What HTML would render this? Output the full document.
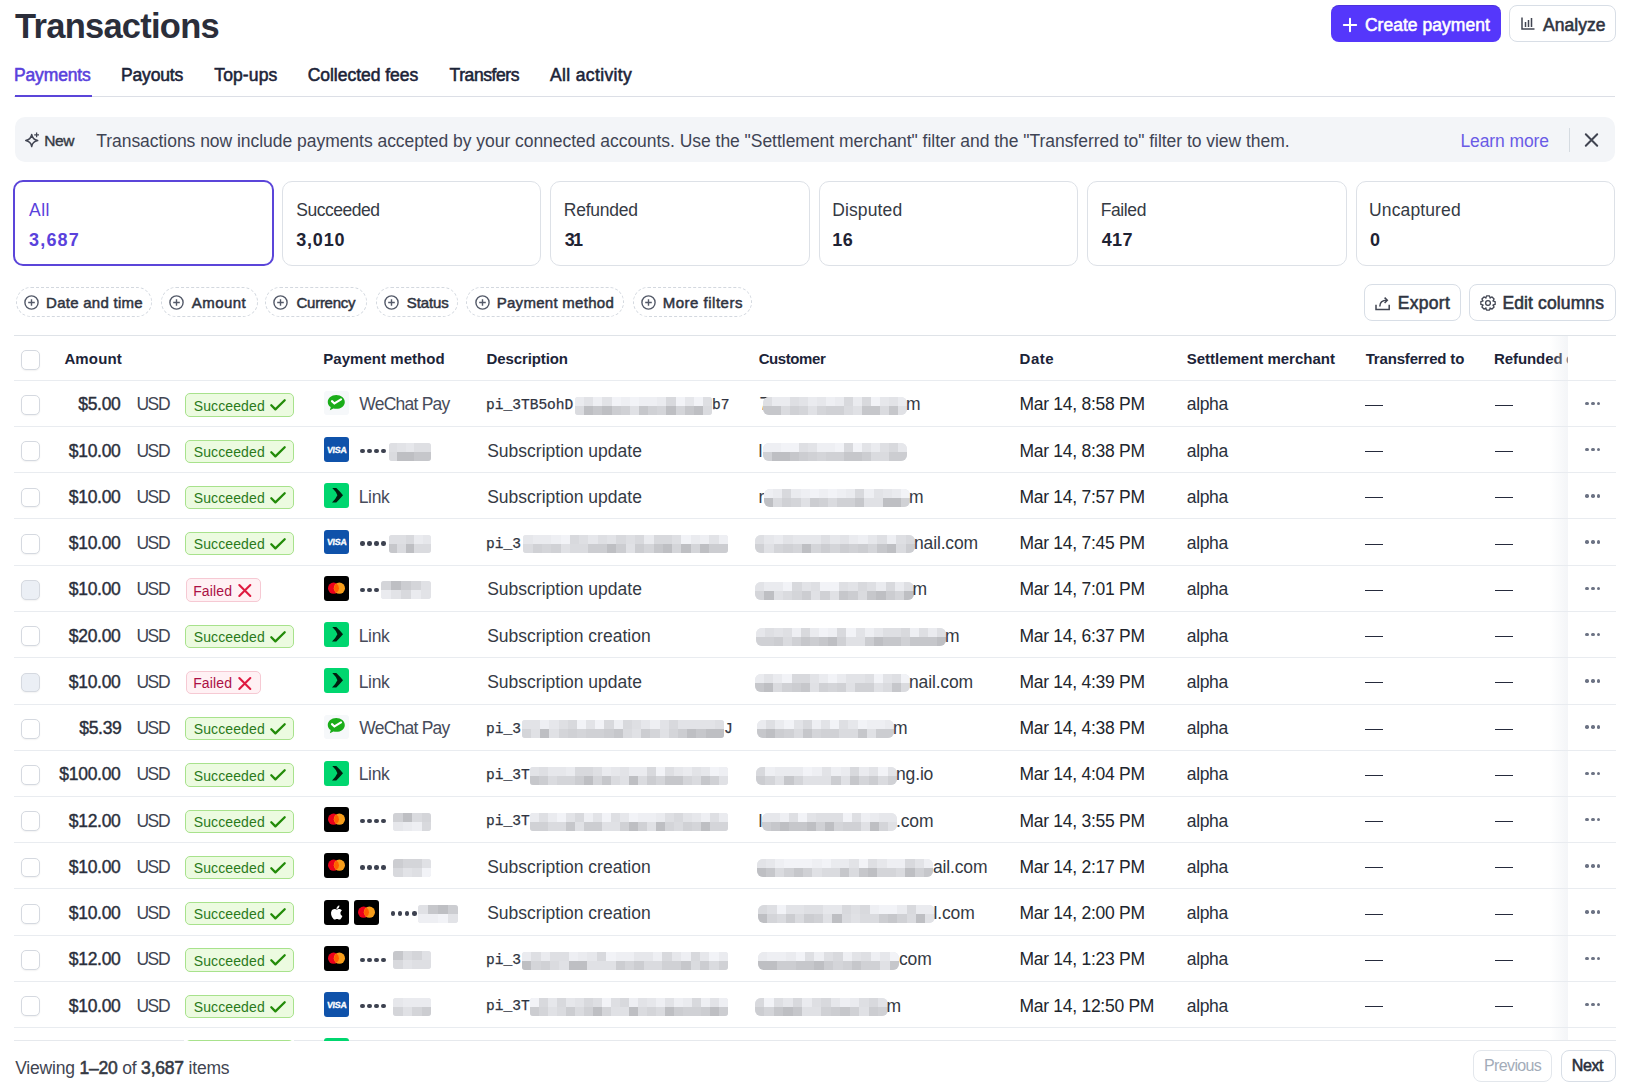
<!DOCTYPE html>
<html><head><meta charset="utf-8"><title>Transactions</title>
<style>
html,body{margin:0;padding:0;background:#fff;}
body{width:1637px;height:1090px;position:relative;overflow:hidden;font-family:"Liberation Sans", sans-serif;}
.t{position:absolute;line-height:0;white-space:nowrap;}
.r{position:absolute;}
svg.r{overflow:visible}
</style></head><body>
<div class="t" style="left:15.10px;top:25.85px;font-size:34.5px;font-weight:700;color:#2b2e3a;letter-spacing:-0.749px;">Transactions</div>
<div class="r" style="left:1331.00px;top:5.00px;width:170.00px;height:37.00px;background:#5537fb;border-radius:8px;box-shadow:inset 0 1px 0 rgba(60,40,160,.35);"></div>
<svg class="r" style="left:1342.5px;top:17.5px" width="14" height="14" viewBox="0 0 14 14"><path d="M7 0.8v12.4M0.8 7h12.4" stroke="#fff" stroke-width="2" stroke-linecap="round"/></svg>
<div class="t" style="left:1364.90px;top:25.14px;font-size:17.5px;font-weight:400;color:#fff;letter-spacing:0.035px;-webkit-text-stroke:0.55px #fff;">Create payment</div>
<div class="r" style="left:1509.00px;top:5.00px;width:106.50px;height:36.50px;background:#fff;border:1px solid #d8dee6;border-radius:8px;box-sizing:border-box;"></div>
<svg class="r" style="left:1520.5px;top:17px" width="14" height="13" viewBox="0 0 14 13"><path d="M1 0.5v11.5h12.5" stroke="#414552" stroke-width="1.5" fill="none"/><path d="M4.5 5v5M7.5 3v7M10.5 1v9" stroke="#414552" stroke-width="1.5"/></svg>
<div class="t" style="left:1543.00px;top:25.14px;font-size:17.5px;font-weight:400;color:#2f3441;letter-spacing:0.029px;-webkit-text-stroke:0.55px #2f3441;">Analyze</div>
<div class="t" style="left:14.00px;top:74.54px;font-size:17.5px;font-weight:400;color:#5a42dc;letter-spacing:-0.151px;-webkit-text-stroke:0.55px #5a42dc;">Payments</div>
<div class="t" style="left:121.00px;top:74.54px;font-size:17.5px;font-weight:400;color:#1c2438;letter-spacing:-0.164px;-webkit-text-stroke:0.55px #1c2438;">Payouts</div>
<div class="t" style="left:214.30px;top:74.54px;font-size:17.5px;font-weight:400;color:#1c2438;letter-spacing:0.115px;-webkit-text-stroke:0.55px #1c2438;">Top-ups</div>
<div class="t" style="left:307.70px;top:74.54px;font-size:17.5px;font-weight:400;color:#1c2438;letter-spacing:-0.027px;-webkit-text-stroke:0.55px #1c2438;">Collected fees</div>
<div class="t" style="left:449.60px;top:74.54px;font-size:17.5px;font-weight:400;color:#1c2438;letter-spacing:-0.426px;-webkit-text-stroke:0.55px #1c2438;">Transfers</div>
<div class="t" style="left:549.90px;top:74.54px;font-size:17.5px;font-weight:400;color:#1c2438;letter-spacing:0.378px;-webkit-text-stroke:0.55px #1c2438;">All activity</div>
<div class="r" style="left:14.00px;top:95.60px;width:1601.00px;height:1.20px;background:#dcdfe6;"></div>
<div class="r" style="left:15.00px;top:94.60px;width:76.50px;height:2.60px;background:#5b45d9;"></div>
<div class="r" style="left:15.00px;top:117.20px;width:1599.50px;height:44.50px;background:#f3f5f8;border-radius:10px;"></div>
<svg class="r" style="left:25px;top:132px" width="16" height="16" viewBox="0 0 16 16"><path d="M6.7 2.5 Q7.6000000000000005 7.6 12.7 8.5 Q7.6000000000000005 9.4 6.7 14.5 Q5.8 9.4 0.7000000000000002 8.5 Q5.8 7.6 6.7 2.5Z" stroke="#414552" stroke-width="1.45" fill="none" stroke-linejoin="round"/><path d="M11.6 0.4v4.8M9.2 2.8h4.8" stroke="#414552" stroke-width="1.25"/></svg>
<div class="t" style="left:44.30px;top:141.43px;font-size:15.5px;font-weight:400;color:#353a44;letter-spacing:-0.407px;-webkit-text-stroke:0.4px #353a44;">New</div>
<div class="t" style="left:96.20px;top:140.74px;font-size:17.5px;font-weight:400;color:#3f4454;letter-spacing:-0.034px;">Transactions now include payments accepted by your connected accounts. Use the "Settlement merchant" filter and the "Transferred to" filter to view them.</div>
<div class="t" style="left:1460.40px;top:140.64px;font-size:17.5px;font-weight:400;color:#6a5be6;letter-spacing:-0.095px;">Learn more</div>
<div class="r" style="left:1568.50px;top:127.50px;width:1.40px;height:24.00px;background:#d5dbe1;"></div>
<svg class="r" style="left:1584px;top:132.5px" width="15" height="14" viewBox="0 0 15 14"><path d="M1.8 1.3L13.2 12.7M13.2 1.3L1.8 12.7" stroke="#414552" stroke-width="2" stroke-linecap="round"/></svg>
<div class="r" style="left:13.20px;top:180.40px;width:261.20px;height:86.00px;border:2px solid #5b45d9;border-radius:10px;box-sizing:border-box;background:#fff;"></div>
<div class="t" style="left:29.00px;top:209.84px;font-size:17.5px;font-weight:400;color:#5a42dc;letter-spacing:0.520px;">All</div>
<div class="t" style="left:29.00px;top:240.16px;font-size:18px;font-weight:700;color:#5a42dc;letter-spacing:1.192px;">3,687</div>
<div class="r" style="left:281.66px;top:181.00px;width:259.80px;height:85.00px;border:1px solid #dde1e7;border-radius:10px;box-sizing:border-box;background:#fff;"></div>
<div class="t" style="left:296.26px;top:209.84px;font-size:17.5px;font-weight:400;color:#353a44;letter-spacing:-0.467px;">Succeeded</div>
<div class="t" style="left:296.26px;top:240.16px;font-size:18px;font-weight:700;color:#1f2333;letter-spacing:0.792px;">3,010</div>
<div class="r" style="left:550.12px;top:181.00px;width:259.80px;height:85.00px;border:1px solid #dde1e7;border-radius:10px;box-sizing:border-box;background:#fff;"></div>
<div class="t" style="left:563.72px;top:209.84px;font-size:17.5px;font-weight:400;color:#353a44;letter-spacing:-0.223px;">Refunded</div>
<div class="t" style="left:564.72px;top:240.16px;font-size:18px;font-weight:700;color:#1f2333;letter-spacing:-1.711px;">31</div>
<div class="r" style="left:818.58px;top:181.00px;width:259.80px;height:85.00px;border:1px solid #dde1e7;border-radius:10px;box-sizing:border-box;background:#fff;"></div>
<div class="t" style="left:832.18px;top:209.84px;font-size:17.5px;font-weight:400;color:#353a44;letter-spacing:0.138px;">Disputed</div>
<div class="t" style="left:832.18px;top:240.16px;font-size:18px;font-weight:700;color:#1f2333;letter-spacing:0.489px;">16</div>
<div class="r" style="left:1087.04px;top:181.00px;width:259.80px;height:85.00px;border:1px solid #dde1e7;border-radius:10px;box-sizing:border-box;background:#fff;"></div>
<div class="t" style="left:1100.64px;top:209.84px;font-size:17.5px;font-weight:400;color:#353a44;letter-spacing:-0.386px;">Failed</div>
<div class="t" style="left:1101.64px;top:240.16px;font-size:18px;font-weight:700;color:#1f2333;letter-spacing:0.489px;">417</div>
<div class="r" style="left:1355.50px;top:181.00px;width:259.80px;height:85.00px;border:1px solid #dde1e7;border-radius:10px;box-sizing:border-box;background:#fff;"></div>
<div class="t" style="left:1369.10px;top:209.84px;font-size:17.5px;font-weight:400;color:#353a44;letter-spacing:0.118px;">Uncaptured</div>
<div class="t" style="left:1370.10px;top:240.16px;font-size:18px;font-weight:700;color:#1f2333;">0</div>
<div class="r" style="left:15.80px;top:286.80px;width:136.70px;height:29.80px;border:1.2px dashed #d3d8df;border-radius:15px;box-sizing:border-box;"></div>
<svg class="r" style="left:24.00px;top:294.6px" width="15" height="15" viewBox="0 0 15 15"><circle cx="7.5" cy="7.5" r="6.6" stroke="#545a69" stroke-width="1.4" fill="none"/><path d="M7.5 4.2v6.6M4.2 7.5h6.6" stroke="#545a69" stroke-width="1.4"/></svg>
<div class="t" style="left:46.10px;top:302.70px;font-size:15px;font-weight:400;color:#2f3441;letter-spacing:0.263px;-webkit-text-stroke:0.5px #2f3441;">Date and time</div>
<div class="r" style="left:160.50px;top:286.80px;width:97.00px;height:29.80px;border:1.2px dashed #d3d8df;border-radius:15px;box-sizing:border-box;"></div>
<svg class="r" style="left:168.70px;top:294.6px" width="15" height="15" viewBox="0 0 15 15"><circle cx="7.5" cy="7.5" r="6.6" stroke="#545a69" stroke-width="1.4" fill="none"/><path d="M7.5 4.2v6.6M4.2 7.5h6.6" stroke="#545a69" stroke-width="1.4"/></svg>
<div class="t" style="left:191.80px;top:302.70px;font-size:15px;font-weight:400;color:#2f3441;letter-spacing:0.455px;-webkit-text-stroke:0.5px #2f3441;">Amount</div>
<div class="r" style="left:265.20px;top:286.80px;width:102.30px;height:29.80px;border:1.2px dashed #d3d8df;border-radius:15px;box-sizing:border-box;"></div>
<svg class="r" style="left:273.40px;top:294.6px" width="15" height="15" viewBox="0 0 15 15"><circle cx="7.5" cy="7.5" r="6.6" stroke="#545a69" stroke-width="1.4" fill="none"/><path d="M7.5 4.2v6.6M4.2 7.5h6.6" stroke="#545a69" stroke-width="1.4"/></svg>
<div class="t" style="left:296.50px;top:302.70px;font-size:15px;font-weight:400;color:#2f3441;letter-spacing:-0.264px;-webkit-text-stroke:0.5px #2f3441;">Currency</div>
<div class="r" style="left:375.50px;top:286.80px;width:82.70px;height:29.80px;border:1.2px dashed #d3d8df;border-radius:15px;box-sizing:border-box;"></div>
<svg class="r" style="left:383.70px;top:294.6px" width="15" height="15" viewBox="0 0 15 15"><circle cx="7.5" cy="7.5" r="6.6" stroke="#545a69" stroke-width="1.4" fill="none"/><path d="M7.5 4.2v6.6M4.2 7.5h6.6" stroke="#545a69" stroke-width="1.4"/></svg>
<div class="t" style="left:406.80px;top:302.70px;font-size:15px;font-weight:400;color:#2f3441;letter-spacing:-0.125px;-webkit-text-stroke:0.5px #2f3441;">Status</div>
<div class="r" style="left:466.40px;top:286.80px;width:157.80px;height:29.80px;border:1.2px dashed #d3d8df;border-radius:15px;box-sizing:border-box;"></div>
<svg class="r" style="left:474.60px;top:294.6px" width="15" height="15" viewBox="0 0 15 15"><circle cx="7.5" cy="7.5" r="6.6" stroke="#545a69" stroke-width="1.4" fill="none"/><path d="M7.5 4.2v6.6M4.2 7.5h6.6" stroke="#545a69" stroke-width="1.4"/></svg>
<div class="t" style="left:496.70px;top:302.70px;font-size:15px;font-weight:400;color:#2f3441;letter-spacing:0.281px;-webkit-text-stroke:0.5px #2f3441;">Payment method</div>
<div class="r" style="left:632.50px;top:286.80px;width:119.90px;height:29.80px;border:1.2px dashed #d3d8df;border-radius:15px;box-sizing:border-box;"></div>
<svg class="r" style="left:640.70px;top:294.6px" width="15" height="15" viewBox="0 0 15 15"><circle cx="7.5" cy="7.5" r="6.6" stroke="#545a69" stroke-width="1.4" fill="none"/><path d="M7.5 4.2v6.6M4.2 7.5h6.6" stroke="#545a69" stroke-width="1.4"/></svg>
<div class="t" style="left:662.80px;top:302.70px;font-size:15px;font-weight:400;color:#2f3441;letter-spacing:0.493px;-webkit-text-stroke:0.5px #2f3441;">More filters</div>
<div class="r" style="left:1364.40px;top:284.10px;width:96.50px;height:36.50px;border:1px solid #d8dee6;border-radius:8px;box-sizing:border-box;background:#fff;"></div>
<svg class="r" style="left:1375px;top:295.5px" width="16" height="15" viewBox="0 0 16 15"><path d="M1 8.8v4.7h13.2v-4.7" stroke="#414552" stroke-width="1.5" fill="none"/><path d="M4.8 10.5 C4.8 6.5 7 4.3 12 4.3" stroke="#414552" stroke-width="1.5" fill="none"/><path d="M9.6 1.6l2.7 2.7-2.7 2.7" stroke="#414552" stroke-width="1.5" fill="none"/></svg>
<div class="t" style="left:1397.70px;top:303.14px;font-size:17.5px;font-weight:400;color:#2f3441;letter-spacing:0.317px;-webkit-text-stroke:0.55px #2f3441;">Export</div>
<div class="r" style="left:1469.20px;top:284.10px;width:146.40px;height:36.50px;border:1px solid #d8dee6;border-radius:8px;box-sizing:border-box;background:#fff;"></div>
<svg class="r" style="left:1479.5px;top:294.5px" width="16" height="16" viewBox="0 0 16 16"><path d="M15.15 6.55 L15.15 9.45 L12.93 10.20 L13.04 9.93 L14.08 12.03 L12.03 14.08 L9.93 13.04 L10.20 12.93 L9.45 15.15 L6.55 15.15 L5.80 12.93 L6.07 13.04 L3.97 14.08 L1.92 12.03 L2.96 9.93 L3.07 10.20 L0.85 9.45 L0.85 6.55 L3.07 5.80 L2.96 6.07 L1.92 3.97 L3.97 1.92 L6.07 2.96 L5.80 3.07 L6.55 0.85 L9.45 0.85 L10.20 3.07 L9.93 2.96 L12.03 1.92 L14.08 3.97 L13.04 6.07 L12.93 5.80Z" stroke="#414552" stroke-width="1.3" fill="none" stroke-linejoin="round"/><circle cx="8" cy="8" r="2.4" stroke="#414552" stroke-width="1.3" fill="none"/></svg>
<div class="t" style="left:1502.40px;top:303.14px;font-size:17.5px;font-weight:400;color:#2f3441;letter-spacing:0.124px;-webkit-text-stroke:0.55px #2f3441;">Edit columns</div>
<div class="r" style="left:14.00px;top:334.60px;width:1601.50px;height:1.30px;background:#dfe3e8;"></div>
<div class="t" style="left:64.40px;top:358.50px;font-size:15px;font-weight:700;color:#1c2438;letter-spacing:0.148px;">Amount</div>
<div class="t" style="left:323.20px;top:358.50px;font-size:15px;font-weight:700;color:#1c2438;letter-spacing:0.047px;">Payment method</div>
<div class="t" style="left:486.50px;top:358.50px;font-size:15px;font-weight:700;color:#1c2438;letter-spacing:-0.105px;">Description</div>
<div class="t" style="left:758.70px;top:358.50px;font-size:15px;font-weight:700;color:#1c2438;letter-spacing:-0.425px;">Customer</div>
<div class="t" style="left:1019.60px;top:358.50px;font-size:15px;font-weight:700;color:#1c2438;letter-spacing:0.477px;">Date</div>
<div class="t" style="left:1186.70px;top:358.50px;font-size:15px;font-weight:700;color:#1c2438;letter-spacing:-0.010px;">Settlement merchant</div>
<div class="t" style="left:1365.70px;top:358.50px;font-size:15px;font-weight:700;color:#1c2438;letter-spacing:-0.169px;">Transferred to</div>
<div class="t" style="left:1494.00px;top:358.50px;font-size:15px;font-weight:700;color:#1c2438;letter-spacing:-0.086px;">Refunded</div>
<div class="r" style="left:1566px;top:350px;width:2px;height:16px;overflow:hidden"><div class="t" style="left:0;top:8.5px;font-size:15px;font-weight:700;color:#1c2438">c</div></div>
<div class="r" style="left:21.00px;top:350.00px;width:19.00px;height:19.80px;border:1.2px solid #d5d9e0;border-radius:5px;box-sizing:border-box;background:#fff;box-shadow:0 1px 1.5px rgba(0,0,0,.05);"></div>
<div class="r" style="left:0;top:0;width:1637px;height:1041px;overflow:hidden">
<div class="r" style="left:14.00px;top:380.00px;width:1601.50px;height:1.00px;background:#e9ecf0;"></div>
<div class="r" style="left:21.00px;top:395.18px;width:19.00px;height:19.80px;border:1.2px solid #d5d9e0;border-radius:5px;box-sizing:border-box;background:#fff;box-shadow:0 1px 1.5px rgba(0,0,0,.05);"></div>
<div class="t" style="right:1516.47px;top:404.41px;font-size:17.5px;font-weight:400;color:#2a2f3c;letter-spacing:-0.300px;-webkit-text-stroke:0.4px #2a2f3c;">$5.00</div>
<div class="t" style="left:136.40px;top:404.41px;font-size:17.5px;font-weight:400;color:#414552;letter-spacing:-1.405px;">USD</div>
<div class="r" style="left:185.20px;top:393.40px;width:108.50px;height:23.20px;background:#ecfbe0;border:1px solid #a8e28c;border-radius:5px;box-sizing:border-box;"></div>
<div class="t" style="left:193.70px;top:405.62px;font-size:14px;font-weight:400;color:#2a7a1a;letter-spacing:0.116px;">Succeeded</div>
<svg class="r" style="left:269.5px;top:399.45px" width="16" height="12" viewBox="0 0 16 12"><path d="M1.3 6.3l4.1 4.1L14.7 1.2" stroke="#238b09" stroke-width="2.3" fill="none" stroke-linecap="round" stroke-linejoin="round"/></svg>
<div class="r" style="left:324px;top:390.85px;width:25px;height:24.5px;background:#f6f8fa;border-radius:3px"></div>
<svg class="r" style="left:325.6px;top:392.65px" width="21" height="20" viewBox="0 0 19 18"><path d="M9.3 1.8C5 1.8 1.6 4.6 1.6 8c0 1.9 1 3.6 2.7 4.7l-.8 2.9 3.2-1.7c.8.2 1.7.4 2.6.4 4.3 0 7.7-2.8 7.7-6.3S13.6 1.8 9.3 1.8z" fill="#1aad19"/><path d="M5.4 7.3l2.2 2.1 6-3.6" stroke="#fff" stroke-width="1.9" fill="none" stroke-linecap="round"/></svg>
<div class="t" style="left:359.30px;top:404.41px;font-size:17.5px;font-weight:400;color:#474c5b;letter-spacing:-0.774px;">WeChat Pay</div>
<div class="t" style="left:486.00px;top:404.83px;font-size:14.55px;font-weight:400;color:#30343f;font-family:'Liberation Mono', monospace;-webkit-text-stroke:0.25px #30343f;">pi_3TB5ohD</div>
<div class="r" style="left:575.0px;top:396.6px;width:137.0px;height:18px;border-radius:3px;overflow:hidden;background:#e3e5e9;display:flex;flex-direction:column"><div style="display:flex;height:50%"><div style="flex:1;background:rgb(234,235,239)"></div><div style="flex:1;background:rgb(226,227,231)"></div><div style="flex:1;background:rgb(238,239,243)"></div><div style="flex:1;background:rgb(226,227,231)"></div><div style="flex:1;background:rgb(242,243,247)"></div><div style="flex:1;background:rgb(238,239,243)"></div><div style="flex:1;background:rgb(242,243,247)"></div><div style="flex:1;background:rgb(238,239,243)"></div><div style="flex:1;background:rgb(238,239,243)"></div><div style="flex:1;background:rgb(234,235,239)"></div><div style="flex:1;background:rgb(216,217,221)"></div><div style="flex:1;background:rgb(242,243,247)"></div><div style="flex:1;background:rgb(230,231,235)"></div><div style="flex:1;background:rgb(242,243,247)"></div><div style="flex:1;background:rgb(222,223,227)"></div></div><div style="display:flex;height:50%"><div style="flex:1;background:rgb(218,219,223)"></div><div style="flex:1;background:rgb(190,191,195)"></div><div style="flex:1;background:rgb(198,199,203)"></div><div style="flex:1;background:rgb(190,191,195)"></div><div style="flex:1;background:rgb(204,205,209)"></div><div style="flex:1;background:rgb(208,209,213)"></div><div style="flex:1;background:rgb(224,225,229)"></div><div style="flex:1;background:rgb(198,199,203)"></div><div style="flex:1;background:rgb(208,209,213)"></div><div style="flex:1;background:rgb(212,213,217)"></div><div style="flex:1;background:rgb(190,191,195)"></div><div style="flex:1;background:rgb(212,213,217)"></div><div style="flex:1;background:rgb(198,199,203)"></div><div style="flex:1;background:rgb(190,191,195)"></div><div style="flex:1;background:rgb(218,219,223)"></div></div></div>
<div class="t" style="left:712.00px;top:404.83px;font-size:14.55px;font-weight:400;color:#30343f;font-family:'Liberation Mono', monospace;-webkit-text-stroke:0.25px #30343f;">b7</div>
<div class="t" style="left:759.50px;top:404.41px;font-size:17.5px;font-weight:400;color:#353a44;">7</div>
<div class="r" style="left:762.5px;top:396.7px;width:144.5px;height:18px;border-radius:6px;overflow:hidden;background:#e3e5e9;display:flex;flex-direction:column"><div style="display:flex;height:50%"><div style="flex:1;background:rgb(222,223,227)"></div><div style="flex:1;background:rgb(234,235,239)"></div><div style="flex:1;background:rgb(234,235,239)"></div><div style="flex:1;background:rgb(222,223,227)"></div><div style="flex:1;background:rgb(226,227,231)"></div><div style="flex:1;background:rgb(234,235,239)"></div><div style="flex:1;background:rgb(230,231,235)"></div><div style="flex:1;background:rgb(238,239,243)"></div><div style="flex:1;background:rgb(234,235,239)"></div><div style="flex:1;background:rgb(216,217,221)"></div><div style="flex:1;background:rgb(234,235,239)"></div><div style="flex:1;background:rgb(216,217,221)"></div><div style="flex:1;background:rgb(242,243,247)"></div><div style="flex:1;background:rgb(230,231,235)"></div><div style="flex:1;background:rgb(226,227,231)"></div><div style="flex:1;background:rgb(234,235,239)"></div></div><div style="display:flex;height:50%"><div style="flex:1;background:rgb(198,199,203)"></div><div style="flex:1;background:rgb(198,199,203)"></div><div style="flex:1;background:rgb(218,219,223)"></div><div style="flex:1;background:rgb(208,209,213)"></div><div style="flex:1;background:rgb(212,213,217)"></div><div style="flex:1;background:rgb(224,225,229)"></div><div style="flex:1;background:rgb(212,213,217)"></div><div style="flex:1;background:rgb(208,209,213)"></div><div style="flex:1;background:rgb(208,209,213)"></div><div style="flex:1;background:rgb(218,219,223)"></div><div style="flex:1;background:rgb(224,225,229)"></div><div style="flex:1;background:rgb(198,199,203)"></div><div style="flex:1;background:rgb(198,199,203)"></div><div style="flex:1;background:rgb(218,219,223)"></div><div style="flex:1;background:rgb(198,199,203)"></div><div style="flex:1;background:rgb(224,225,229)"></div></div></div>
<div class="t" style="left:906.00px;top:404.41px;font-size:17.5px;font-weight:400;color:#353a44;letter-spacing:-0.150px;">m</div>
<div class="t" style="left:1019.40px;top:404.41px;font-size:17.5px;font-weight:400;color:#21252c;letter-spacing:-0.270px;">Mar 14, 8:58 PM</div>
<div class="t" style="left:1186.80px;top:404.41px;font-size:17.5px;font-weight:400;color:#2a2f3b;letter-spacing:-0.371px;">alpha</div>
<div class="r" style="left:1365.20px;top:405.00px;width:18.00px;height:1.20px;background:#262b3d;"></div>
<div class="r" style="left:1494.50px;top:405.00px;width:18.50px;height:1.20px;background:#262b3d;"></div>
<div class="r" style="left:14.00px;top:426.00px;width:1601.50px;height:1.00px;background:#e9ecf0;"></div>
<div class="r" style="left:21.00px;top:441.43px;width:19.00px;height:19.80px;border:1.2px solid #d5d9e0;border-radius:5px;box-sizing:border-box;background:#fff;box-shadow:0 1px 1.5px rgba(0,0,0,.05);"></div>
<div class="t" style="right:1516.47px;top:450.66px;font-size:17.5px;font-weight:400;color:#2a2f3c;letter-spacing:-0.300px;-webkit-text-stroke:0.4px #2a2f3c;">$10.00</div>
<div class="t" style="left:136.40px;top:450.66px;font-size:17.5px;font-weight:400;color:#414552;letter-spacing:-1.405px;">USD</div>
<div class="r" style="left:185.20px;top:439.65px;width:108.50px;height:23.20px;background:#ecfbe0;border:1px solid #a8e28c;border-radius:5px;box-sizing:border-box;"></div>
<div class="t" style="left:193.70px;top:451.87px;font-size:14px;font-weight:400;color:#2a7a1a;letter-spacing:0.116px;">Succeeded</div>
<svg class="r" style="left:269.5px;top:445.70px" width="16" height="12" viewBox="0 0 16 12"><path d="M1.3 6.3l4.1 4.1L14.7 1.2" stroke="#238b09" stroke-width="2.3" fill="none" stroke-linecap="round" stroke-linejoin="round"/></svg>
<div class="r" style="left:324px;top:437.10px;width:25px;height:24.5px;background:#0f52aa;border-radius:3px;"></div>
<div class="t" style="left:326.6px;top:449.70px;font-size:8.8px;font-weight:700;color:#fff;letter-spacing:-0.2px;transform:skewX(-6deg);-webkit-text-stroke:0.3px #fff">VISA</div>
<div class="r" style="left:360.00px;top:448.88px;width:4.50px;height:4.50px;background:#3d4250;border-radius:50%;"></div>
<div class="r" style="left:367.07px;top:448.88px;width:4.50px;height:4.50px;background:#3d4250;border-radius:50%;"></div>
<div class="r" style="left:374.14px;top:448.88px;width:4.50px;height:4.50px;background:#3d4250;border-radius:50%;"></div>
<div class="r" style="left:381.21px;top:448.88px;width:4.50px;height:4.50px;background:#3d4250;border-radius:50%;"></div>
<div class="r" style="left:389.0px;top:442.6px;width:42.0px;height:18px;border-radius:3px;overflow:hidden;background:#e3e5e9;display:flex;flex-direction:column"><div style="display:flex;height:50%"><div style="flex:1;background:rgb(222,223,227)"></div><div style="flex:1;background:rgb(226,227,231)"></div><div style="flex:1;background:rgb(230,231,235)"></div><div style="flex:1;background:rgb(222,223,227)"></div><div style="flex:1;background:rgb(222,223,227)"></div></div><div style="display:flex;height:50%"><div style="flex:1;background:rgb(218,219,223)"></div><div style="flex:1;background:rgb(190,191,195)"></div><div style="flex:1;background:rgb(190,191,195)"></div><div style="flex:1;background:rgb(198,199,203)"></div><div style="flex:1;background:rgb(198,199,203)"></div></div></div>
<div class="t" style="left:487.20px;top:450.66px;font-size:17.5px;font-weight:400;color:#353a44;">Subscription update</div>
<div class="t" style="left:758.50px;top:450.66px;font-size:17.5px;font-weight:400;color:#353a44;">l</div>
<div class="r" style="left:763.0px;top:442.9px;width:144.0px;height:18px;border-radius:6px;overflow:hidden;background:#e3e5e9;display:flex;flex-direction:column"><div style="display:flex;height:50%"><div style="flex:1;background:rgb(238,239,243)"></div><div style="flex:1;background:rgb(238,239,243)"></div><div style="flex:1;background:rgb(242,243,247)"></div><div style="flex:1;background:rgb(242,243,247)"></div><div style="flex:1;background:rgb(222,223,227)"></div><div style="flex:1;background:rgb(226,227,231)"></div><div style="flex:1;background:rgb(238,239,243)"></div><div style="flex:1;background:rgb(238,239,243)"></div><div style="flex:1;background:rgb(242,243,247)"></div><div style="flex:1;background:rgb(216,217,221)"></div><div style="flex:1;background:rgb(242,243,247)"></div><div style="flex:1;background:rgb(226,227,231)"></div><div style="flex:1;background:rgb(234,235,239)"></div><div style="flex:1;background:rgb(222,223,227)"></div><div style="flex:1;background:rgb(216,217,221)"></div><div style="flex:1;background:rgb(230,231,235)"></div></div><div style="display:flex;height:50%"><div style="flex:1;background:rgb(208,209,213)"></div><div style="flex:1;background:rgb(190,191,195)"></div><div style="flex:1;background:rgb(190,191,195)"></div><div style="flex:1;background:rgb(198,199,203)"></div><div style="flex:1;background:rgb(204,205,209)"></div><div style="flex:1;background:rgb(208,209,213)"></div><div style="flex:1;background:rgb(212,213,217)"></div><div style="flex:1;background:rgb(208,209,213)"></div><div style="flex:1;background:rgb(208,209,213)"></div><div style="flex:1;background:rgb(198,199,203)"></div><div style="flex:1;background:rgb(198,199,203)"></div><div style="flex:1;background:rgb(204,205,209)"></div><div style="flex:1;background:rgb(218,219,223)"></div><div style="flex:1;background:rgb(218,219,223)"></div><div style="flex:1;background:rgb(204,205,209)"></div><div style="flex:1;background:rgb(204,205,209)"></div></div></div>
<div class="t" style="left:1019.40px;top:450.66px;font-size:17.5px;font-weight:400;color:#21252c;letter-spacing:-0.270px;">Mar 14, 8:38 PM</div>
<div class="t" style="left:1186.80px;top:450.66px;font-size:17.5px;font-weight:400;color:#2a2f3b;letter-spacing:-0.371px;">alpha</div>
<div class="r" style="left:1365.20px;top:451.00px;width:18.00px;height:1.20px;background:#262b3d;"></div>
<div class="r" style="left:1494.50px;top:451.00px;width:18.50px;height:1.20px;background:#262b3d;"></div>
<div class="r" style="left:14.00px;top:472.00px;width:1601.50px;height:1.00px;background:#e9ecf0;"></div>
<div class="r" style="left:21.00px;top:487.68px;width:19.00px;height:19.80px;border:1.2px solid #d5d9e0;border-radius:5px;box-sizing:border-box;background:#fff;box-shadow:0 1px 1.5px rgba(0,0,0,.05);"></div>
<div class="t" style="right:1516.47px;top:496.91px;font-size:17.5px;font-weight:400;color:#2a2f3c;letter-spacing:-0.300px;-webkit-text-stroke:0.4px #2a2f3c;">$10.00</div>
<div class="t" style="left:136.40px;top:496.91px;font-size:17.5px;font-weight:400;color:#414552;letter-spacing:-1.405px;">USD</div>
<div class="r" style="left:185.20px;top:485.90px;width:108.50px;height:23.20px;background:#ecfbe0;border:1px solid #a8e28c;border-radius:5px;box-sizing:border-box;"></div>
<div class="t" style="left:193.70px;top:498.12px;font-size:14px;font-weight:400;color:#2a7a1a;letter-spacing:0.116px;">Succeeded</div>
<svg class="r" style="left:269.5px;top:491.95px" width="16" height="12" viewBox="0 0 16 12"><path d="M1.3 6.3l4.1 4.1L14.7 1.2" stroke="#238b09" stroke-width="2.3" fill="none" stroke-linecap="round" stroke-linejoin="round"/></svg>
<svg class="r" style="left:324px;top:483.35px" width="25" height="25" viewBox="0 0 25 25"><rect width="25" height="25" rx="3" fill="#00d66f"/><path d="M8.3 5.1L12.3 5.1Q16 8.6 19 12.3Q15.8 16 12.3 19.6L8 19.6Q12 15.6 13.4 12.3Q12.2 8.8 8.3 5.1Z" fill="#011e0f"/></svg>
<div class="t" style="left:358.70px;top:496.91px;font-size:17.5px;font-weight:400;color:#474c5b;letter-spacing:-0.318px;">Link</div>
<div class="t" style="left:487.20px;top:496.91px;font-size:17.5px;font-weight:400;color:#353a44;">Subscription update</div>
<div class="t" style="left:758.50px;top:496.91px;font-size:17.5px;font-weight:400;color:#353a44;">r</div>
<div class="r" style="left:764.0px;top:489.2px;width:146.0px;height:18px;border-radius:6px;overflow:hidden;background:#e3e5e9;display:flex;flex-direction:column"><div style="display:flex;height:50%"><div style="flex:1;background:rgb(238,239,243)"></div><div style="flex:1;background:rgb(234,235,239)"></div><div style="flex:1;background:rgb(216,217,221)"></div><div style="flex:1;background:rgb(234,235,239)"></div><div style="flex:1;background:rgb(238,239,243)"></div><div style="flex:1;background:rgb(242,243,247)"></div><div style="flex:1;background:rgb(238,239,243)"></div><div style="flex:1;background:rgb(242,243,247)"></div><div style="flex:1;background:rgb(238,239,243)"></div><div style="flex:1;background:rgb(234,235,239)"></div><div style="flex:1;background:rgb(216,217,221)"></div><div style="flex:1;background:rgb(238,239,243)"></div><div style="flex:1;background:rgb(226,227,231)"></div><div style="flex:1;background:rgb(230,231,235)"></div><div style="flex:1;background:rgb(234,235,239)"></div><div style="flex:1;background:rgb(242,243,247)"></div></div><div style="display:flex;height:50%"><div style="flex:1;background:rgb(190,191,195)"></div><div style="flex:1;background:rgb(218,219,223)"></div><div style="flex:1;background:rgb(208,209,213)"></div><div style="flex:1;background:rgb(212,213,217)"></div><div style="flex:1;background:rgb(224,225,229)"></div><div style="flex:1;background:rgb(204,205,209)"></div><div style="flex:1;background:rgb(208,209,213)"></div><div style="flex:1;background:rgb(218,219,223)"></div><div style="flex:1;background:rgb(208,209,213)"></div><div style="flex:1;background:rgb(208,209,213)"></div><div style="flex:1;background:rgb(198,199,203)"></div><div style="flex:1;background:rgb(224,225,229)"></div><div style="flex:1;background:rgb(224,225,229)"></div><div style="flex:1;background:rgb(190,191,195)"></div><div style="flex:1;background:rgb(190,191,195)"></div><div style="flex:1;background:rgb(208,209,213)"></div></div></div>
<div class="t" style="left:909.00px;top:496.91px;font-size:17.5px;font-weight:400;color:#353a44;letter-spacing:-0.150px;">m</div>
<div class="t" style="left:1019.40px;top:496.91px;font-size:17.5px;font-weight:400;color:#21252c;letter-spacing:-0.270px;">Mar 14, 7:57 PM</div>
<div class="t" style="left:1186.80px;top:496.91px;font-size:17.5px;font-weight:400;color:#2a2f3b;letter-spacing:-0.371px;">alpha</div>
<div class="r" style="left:1365.20px;top:497.00px;width:18.00px;height:1.20px;background:#262b3d;"></div>
<div class="r" style="left:1494.50px;top:497.00px;width:18.50px;height:1.20px;background:#262b3d;"></div>
<div class="r" style="left:14.00px;top:518.00px;width:1601.50px;height:1.00px;background:#e9ecf0;"></div>
<div class="r" style="left:21.00px;top:533.92px;width:19.00px;height:19.80px;border:1.2px solid #d5d9e0;border-radius:5px;box-sizing:border-box;background:#fff;box-shadow:0 1px 1.5px rgba(0,0,0,.05);"></div>
<div class="t" style="right:1516.47px;top:543.16px;font-size:17.5px;font-weight:400;color:#2a2f3c;letter-spacing:-0.300px;-webkit-text-stroke:0.4px #2a2f3c;">$10.00</div>
<div class="t" style="left:136.40px;top:543.16px;font-size:17.5px;font-weight:400;color:#414552;letter-spacing:-1.405px;">USD</div>
<div class="r" style="left:185.20px;top:532.15px;width:108.50px;height:23.20px;background:#ecfbe0;border:1px solid #a8e28c;border-radius:5px;box-sizing:border-box;"></div>
<div class="t" style="left:193.70px;top:544.37px;font-size:14px;font-weight:400;color:#2a7a1a;letter-spacing:0.116px;">Succeeded</div>
<svg class="r" style="left:269.5px;top:538.20px" width="16" height="12" viewBox="0 0 16 12"><path d="M1.3 6.3l4.1 4.1L14.7 1.2" stroke="#238b09" stroke-width="2.3" fill="none" stroke-linecap="round" stroke-linejoin="round"/></svg>
<div class="r" style="left:324px;top:529.60px;width:25px;height:24.5px;background:#0f52aa;border-radius:3px;"></div>
<div class="t" style="left:326.6px;top:542.20px;font-size:8.8px;font-weight:700;color:#fff;letter-spacing:-0.2px;transform:skewX(-6deg);-webkit-text-stroke:0.3px #fff">VISA</div>
<div class="r" style="left:360.00px;top:541.38px;width:4.50px;height:4.50px;background:#3d4250;border-radius:50%;"></div>
<div class="r" style="left:367.07px;top:541.38px;width:4.50px;height:4.50px;background:#3d4250;border-radius:50%;"></div>
<div class="r" style="left:374.14px;top:541.38px;width:4.50px;height:4.50px;background:#3d4250;border-radius:50%;"></div>
<div class="r" style="left:381.21px;top:541.38px;width:4.50px;height:4.50px;background:#3d4250;border-radius:50%;"></div>
<div class="r" style="left:389.0px;top:535.1px;width:42.0px;height:18px;border-radius:3px;overflow:hidden;background:#e3e5e9;display:flex;flex-direction:column"><div style="display:flex;height:50%"><div style="flex:1;background:rgb(222,223,227)"></div><div style="flex:1;background:rgb(222,223,227)"></div><div style="flex:1;background:rgb(216,217,221)"></div><div style="flex:1;background:rgb(234,235,239)"></div><div style="flex:1;background:rgb(230,231,235)"></div></div><div style="display:flex;height:50%"><div style="flex:1;background:rgb(198,199,203)"></div><div style="flex:1;background:rgb(218,219,223)"></div><div style="flex:1;background:rgb(190,191,195)"></div><div style="flex:1;background:rgb(218,219,223)"></div><div style="flex:1;background:rgb(218,219,223)"></div></div></div>
<div class="t" style="left:486.00px;top:543.58px;font-size:14.55px;font-weight:400;color:#30343f;font-family:'Liberation Mono', monospace;-webkit-text-stroke:0.25px #30343f;">pi_3</div>
<div class="r" style="left:523.4px;top:535.3px;width:204.6px;height:18px;border-radius:3px;overflow:hidden;background:#e3e5e9;display:flex;flex-direction:column"><div style="display:flex;height:50%"><div style="flex:1;background:rgb(230,231,235)"></div><div style="flex:1;background:rgb(234,235,239)"></div><div style="flex:1;background:rgb(234,235,239)"></div><div style="flex:1;background:rgb(238,239,243)"></div><div style="flex:1;background:rgb(242,243,247)"></div><div style="flex:1;background:rgb(216,217,221)"></div><div style="flex:1;background:rgb(222,223,227)"></div><div style="flex:1;background:rgb(230,231,235)"></div><div style="flex:1;background:rgb(222,223,227)"></div><div style="flex:1;background:rgb(226,227,231)"></div><div style="flex:1;background:rgb(216,217,221)"></div><div style="flex:1;background:rgb(222,223,227)"></div><div style="flex:1;background:rgb(216,217,221)"></div><div style="flex:1;background:rgb(234,235,239)"></div><div style="flex:1;background:rgb(216,217,221)"></div><div style="flex:1;background:rgb(216,217,221)"></div><div style="flex:1;background:rgb(222,223,227)"></div><div style="flex:1;background:rgb(242,243,247)"></div><div style="flex:1;background:rgb(234,235,239)"></div><div style="flex:1;background:rgb(238,239,243)"></div><div style="flex:1;background:rgb(226,227,231)"></div><div style="flex:1;background:rgb(238,239,243)"></div></div><div style="display:flex;height:50%"><div style="flex:1;background:rgb(218,219,223)"></div><div style="flex:1;background:rgb(208,209,213)"></div><div style="flex:1;background:rgb(212,213,217)"></div><div style="flex:1;background:rgb(208,209,213)"></div><div style="flex:1;background:rgb(224,225,229)"></div><div style="flex:1;background:rgb(218,219,223)"></div><div style="flex:1;background:rgb(218,219,223)"></div><div style="flex:1;background:rgb(204,205,209)"></div><div style="flex:1;background:rgb(204,205,209)"></div><div style="flex:1;background:rgb(190,191,195)"></div><div style="flex:1;background:rgb(204,205,209)"></div><div style="flex:1;background:rgb(224,225,229)"></div><div style="flex:1;background:rgb(204,205,209)"></div><div style="flex:1;background:rgb(212,213,217)"></div><div style="flex:1;background:rgb(198,199,203)"></div><div style="flex:1;background:rgb(190,191,195)"></div><div style="flex:1;background:rgb(212,213,217)"></div><div style="flex:1;background:rgb(190,191,195)"></div><div style="flex:1;background:rgb(212,213,217)"></div><div style="flex:1;background:rgb(190,191,195)"></div><div style="flex:1;background:rgb(204,205,209)"></div><div style="flex:1;background:rgb(204,205,209)"></div></div></div>
<div class="r" style="left:755.0px;top:535.4px;width:160.0px;height:18px;border-radius:6px;overflow:hidden;background:#e3e5e9;display:flex;flex-direction:column"><div style="display:flex;height:50%"><div style="flex:1;background:rgb(222,223,227)"></div><div style="flex:1;background:rgb(230,231,235)"></div><div style="flex:1;background:rgb(234,235,239)"></div><div style="flex:1;background:rgb(226,227,231)"></div><div style="flex:1;background:rgb(230,231,235)"></div><div style="flex:1;background:rgb(230,231,235)"></div><div style="flex:1;background:rgb(230,231,235)"></div><div style="flex:1;background:rgb(222,223,227)"></div><div style="flex:1;background:rgb(230,231,235)"></div><div style="flex:1;background:rgb(226,227,231)"></div><div style="flex:1;background:rgb(234,235,239)"></div><div style="flex:1;background:rgb(238,239,243)"></div><div style="flex:1;background:rgb(230,231,235)"></div><div style="flex:1;background:rgb(222,223,227)"></div><div style="flex:1;background:rgb(238,239,243)"></div><div style="flex:1;background:rgb(222,223,227)"></div><div style="flex:1;background:rgb(216,217,221)"></div></div><div style="display:flex;height:50%"><div style="flex:1;background:rgb(208,209,213)"></div><div style="flex:1;background:rgb(224,225,229)"></div><div style="flex:1;background:rgb(212,213,217)"></div><div style="flex:1;background:rgb(208,209,213)"></div><div style="flex:1;background:rgb(212,213,217)"></div><div style="flex:1;background:rgb(190,191,195)"></div><div style="flex:1;background:rgb(212,213,217)"></div><div style="flex:1;background:rgb(204,205,209)"></div><div style="flex:1;background:rgb(212,213,217)"></div><div style="flex:1;background:rgb(204,205,209)"></div><div style="flex:1;background:rgb(208,209,213)"></div><div style="flex:1;background:rgb(204,205,209)"></div><div style="flex:1;background:rgb(212,213,217)"></div><div style="flex:1;background:rgb(198,199,203)"></div><div style="flex:1;background:rgb(190,191,195)"></div><div style="flex:1;background:rgb(218,219,223)"></div><div style="flex:1;background:rgb(204,205,209)"></div></div></div>
<div class="t" style="left:914.00px;top:543.16px;font-size:17.5px;font-weight:400;color:#353a44;letter-spacing:-0.150px;">nail.com</div>
<div class="t" style="left:1019.40px;top:543.16px;font-size:17.5px;font-weight:400;color:#21252c;letter-spacing:-0.270px;">Mar 14, 7:45 PM</div>
<div class="t" style="left:1186.80px;top:543.16px;font-size:17.5px;font-weight:400;color:#2a2f3b;letter-spacing:-0.371px;">alpha</div>
<div class="r" style="left:1365.20px;top:544.00px;width:18.00px;height:1.20px;background:#262b3d;"></div>
<div class="r" style="left:1494.50px;top:544.00px;width:18.50px;height:1.20px;background:#262b3d;"></div>
<div class="r" style="left:14.00px;top:565.00px;width:1601.50px;height:1.00px;background:#e9ecf0;"></div>
<div class="r" style="left:21.00px;top:580.17px;width:19.00px;height:19.80px;border:1.2px solid #d5d9e0;border-radius:5px;box-sizing:border-box;background:#ebeff5;box-shadow:0 1px 1.5px rgba(0,0,0,.05);"></div>
<div class="t" style="right:1516.47px;top:589.41px;font-size:17.5px;font-weight:400;color:#2a2f3c;letter-spacing:-0.300px;-webkit-text-stroke:0.4px #2a2f3c;">$10.00</div>
<div class="t" style="left:136.40px;top:589.41px;font-size:17.5px;font-weight:400;color:#414552;letter-spacing:-1.405px;">USD</div>
<div class="r" style="left:185.50px;top:578.40px;width:75.00px;height:23.20px;background:#fff1f4;border:1px solid #f6c9d3;border-radius:5px;box-sizing:border-box;"></div>
<div class="t" style="left:193.20px;top:590.62px;font-size:14px;font-weight:400;color:#ab1044;letter-spacing:0.131px;">Failed</div>
<svg class="r" style="left:238px;top:584.45px" width="14" height="13" viewBox="0 0 14 13"><path d="M1.3 1L12.3 12M12.3 1L1.3 12" stroke="#df1b41" stroke-width="2.1" stroke-linecap="round"/></svg>
<svg class="r" style="left:324px;top:575.85px" width="25" height="25" viewBox="0 0 25 25"><rect width="25" height="25" rx="3" fill="#000"/><circle cx="9.6" cy="12.2" r="5.6" fill="#eb001b"/><circle cx="15.4" cy="12.2" r="5.6" fill="#f79e1b"/><path d="M12.5 7.55a5.6 5.6 0 0 1 0 9.3a5.6 5.6 0 0 1 0-9.3z" fill="#ff5f00"/></svg>
<div class="r" style="left:360.00px;top:587.62px;width:4.50px;height:4.50px;background:#3d4250;border-radius:50%;"></div>
<div class="r" style="left:367.07px;top:587.62px;width:4.50px;height:4.50px;background:#3d4250;border-radius:50%;"></div>
<div class="r" style="left:374.14px;top:587.62px;width:4.50px;height:4.50px;background:#3d4250;border-radius:50%;"></div>
<div class="r" style="left:381.0px;top:581.4px;width:50.0px;height:18px;border-radius:3px;overflow:hidden;background:#e3e5e9;display:flex;flex-direction:column"><div style="display:flex;height:50%"><div style="flex:1;background:rgb(212,213,217)"></div><div style="flex:1;background:rgb(190,191,195)"></div><div style="flex:1;background:rgb(204,205,209)"></div><div style="flex:1;background:rgb(212,213,217)"></div><div style="flex:1;background:rgb(224,225,229)"></div></div><div style="display:flex;height:50%"><div style="flex:1;background:rgb(234,235,239)"></div><div style="flex:1;background:rgb(226,227,231)"></div><div style="flex:1;background:rgb(216,217,221)"></div><div style="flex:1;background:rgb(234,235,239)"></div><div style="flex:1;background:rgb(226,227,231)"></div></div></div>
<div class="t" style="left:487.20px;top:589.41px;font-size:17.5px;font-weight:400;color:#353a44;">Subscription update</div>
<div class="r" style="left:755.0px;top:581.7px;width:158.5px;height:18px;border-radius:6px;overflow:hidden;background:#e3e5e9;display:flex;flex-direction:column"><div style="display:flex;height:50%"><div style="flex:1;background:rgb(226,227,231)"></div><div style="flex:1;background:rgb(234,235,239)"></div><div style="flex:1;background:rgb(234,235,239)"></div><div style="flex:1;background:rgb(242,243,247)"></div><div style="flex:1;background:rgb(216,217,221)"></div><div style="flex:1;background:rgb(226,227,231)"></div><div style="flex:1;background:rgb(222,223,227)"></div><div style="flex:1;background:rgb(242,243,247)"></div><div style="flex:1;background:rgb(242,243,247)"></div><div style="flex:1;background:rgb(222,223,227)"></div><div style="flex:1;background:rgb(226,227,231)"></div><div style="flex:1;background:rgb(216,217,221)"></div><div style="flex:1;background:rgb(222,223,227)"></div><div style="flex:1;background:rgb(234,235,239)"></div><div style="flex:1;background:rgb(216,217,221)"></div><div style="flex:1;background:rgb(234,235,239)"></div><div style="flex:1;background:rgb(222,223,227)"></div></div><div style="display:flex;height:50%"><div style="flex:1;background:rgb(212,213,217)"></div><div style="flex:1;background:rgb(190,191,195)"></div><div style="flex:1;background:rgb(224,225,229)"></div><div style="flex:1;background:rgb(218,219,223)"></div><div style="flex:1;background:rgb(212,213,217)"></div><div style="flex:1;background:rgb(204,205,209)"></div><div style="flex:1;background:rgb(224,225,229)"></div><div style="flex:1;background:rgb(208,209,213)"></div><div style="flex:1;background:rgb(224,225,229)"></div><div style="flex:1;background:rgb(198,199,203)"></div><div style="flex:1;background:rgb(204,205,209)"></div><div style="flex:1;background:rgb(218,219,223)"></div><div style="flex:1;background:rgb(198,199,203)"></div><div style="flex:1;background:rgb(190,191,195)"></div><div style="flex:1;background:rgb(204,205,209)"></div><div style="flex:1;background:rgb(212,213,217)"></div><div style="flex:1;background:rgb(190,191,195)"></div></div></div>
<div class="t" style="left:912.50px;top:589.41px;font-size:17.5px;font-weight:400;color:#353a44;letter-spacing:-0.150px;">m</div>
<div class="t" style="left:1019.40px;top:589.41px;font-size:17.5px;font-weight:400;color:#21252c;letter-spacing:-0.270px;">Mar 14, 7:01 PM</div>
<div class="t" style="left:1186.80px;top:589.41px;font-size:17.5px;font-weight:400;color:#2a2f3b;letter-spacing:-0.371px;">alpha</div>
<div class="r" style="left:1365.20px;top:590.00px;width:18.00px;height:1.20px;background:#262b3d;"></div>
<div class="r" style="left:1494.50px;top:590.00px;width:18.50px;height:1.20px;background:#262b3d;"></div>
<div class="r" style="left:14.00px;top:611.00px;width:1601.50px;height:1.00px;background:#e9ecf0;"></div>
<div class="r" style="left:21.00px;top:626.42px;width:19.00px;height:19.80px;border:1.2px solid #d5d9e0;border-radius:5px;box-sizing:border-box;background:#fff;box-shadow:0 1px 1.5px rgba(0,0,0,.05);"></div>
<div class="t" style="right:1516.47px;top:635.66px;font-size:17.5px;font-weight:400;color:#2a2f3c;letter-spacing:-0.300px;-webkit-text-stroke:0.4px #2a2f3c;">$20.00</div>
<div class="t" style="left:136.40px;top:635.66px;font-size:17.5px;font-weight:400;color:#414552;letter-spacing:-1.405px;">USD</div>
<div class="r" style="left:185.20px;top:624.65px;width:108.50px;height:23.20px;background:#ecfbe0;border:1px solid #a8e28c;border-radius:5px;box-sizing:border-box;"></div>
<div class="t" style="left:193.70px;top:636.87px;font-size:14px;font-weight:400;color:#2a7a1a;letter-spacing:0.116px;">Succeeded</div>
<svg class="r" style="left:269.5px;top:630.70px" width="16" height="12" viewBox="0 0 16 12"><path d="M1.3 6.3l4.1 4.1L14.7 1.2" stroke="#238b09" stroke-width="2.3" fill="none" stroke-linecap="round" stroke-linejoin="round"/></svg>
<svg class="r" style="left:324px;top:622.10px" width="25" height="25" viewBox="0 0 25 25"><rect width="25" height="25" rx="3" fill="#00d66f"/><path d="M8.3 5.1L12.3 5.1Q16 8.6 19 12.3Q15.8 16 12.3 19.6L8 19.6Q12 15.6 13.4 12.3Q12.2 8.8 8.3 5.1Z" fill="#011e0f"/></svg>
<div class="t" style="left:358.70px;top:635.66px;font-size:17.5px;font-weight:400;color:#474c5b;letter-spacing:-0.318px;">Link</div>
<div class="t" style="left:487.20px;top:635.66px;font-size:17.5px;font-weight:400;color:#353a44;">Subscription creation</div>
<div class="r" style="left:756.0px;top:627.9px;width:190.0px;height:18px;border-radius:6px;overflow:hidden;background:#e3e5e9;display:flex;flex-direction:column"><div style="display:flex;height:50%"><div style="flex:1;background:rgb(230,231,235)"></div><div style="flex:1;background:rgb(222,223,227)"></div><div style="flex:1;background:rgb(226,227,231)"></div><div style="flex:1;background:rgb(222,223,227)"></div><div style="flex:1;background:rgb(238,239,243)"></div><div style="flex:1;background:rgb(216,217,221)"></div><div style="flex:1;background:rgb(234,235,239)"></div><div style="flex:1;background:rgb(242,243,247)"></div><div style="flex:1;background:rgb(238,239,243)"></div><div style="flex:1;background:rgb(216,217,221)"></div><div style="flex:1;background:rgb(242,243,247)"></div><div style="flex:1;background:rgb(226,227,231)"></div><div style="flex:1;background:rgb(238,239,243)"></div><div style="flex:1;background:rgb(230,231,235)"></div><div style="flex:1;background:rgb(222,223,227)"></div><div style="flex:1;background:rgb(222,223,227)"></div><div style="flex:1;background:rgb(216,217,221)"></div><div style="flex:1;background:rgb(238,239,243)"></div><div style="flex:1;background:rgb(222,223,227)"></div><div style="flex:1;background:rgb(234,235,239)"></div><div style="flex:1;background:rgb(222,223,227)"></div></div><div style="display:flex;height:50%"><div style="flex:1;background:rgb(208,209,213)"></div><div style="flex:1;background:rgb(208,209,213)"></div><div style="flex:1;background:rgb(204,205,209)"></div><div style="flex:1;background:rgb(218,219,223)"></div><div style="flex:1;background:rgb(208,209,213)"></div><div style="flex:1;background:rgb(198,199,203)"></div><div style="flex:1;background:rgb(204,205,209)"></div><div style="flex:1;background:rgb(198,199,203)"></div><div style="flex:1;background:rgb(190,191,195)"></div><div style="flex:1;background:rgb(208,209,213)"></div><div style="flex:1;background:rgb(224,225,229)"></div><div style="flex:1;background:rgb(224,225,229)"></div><div style="flex:1;background:rgb(204,205,209)"></div><div style="flex:1;background:rgb(190,191,195)"></div><div style="flex:1;background:rgb(198,199,203)"></div><div style="flex:1;background:rgb(198,199,203)"></div><div style="flex:1;background:rgb(208,209,213)"></div><div style="flex:1;background:rgb(198,199,203)"></div><div style="flex:1;background:rgb(198,199,203)"></div><div style="flex:1;background:rgb(198,199,203)"></div><div style="flex:1;background:rgb(190,191,195)"></div></div></div>
<div class="t" style="left:945.00px;top:635.66px;font-size:17.5px;font-weight:400;color:#353a44;letter-spacing:-0.150px;">m</div>
<div class="t" style="left:1019.40px;top:635.66px;font-size:17.5px;font-weight:400;color:#21252c;letter-spacing:-0.270px;">Mar 14, 6:37 PM</div>
<div class="t" style="left:1186.80px;top:635.66px;font-size:17.5px;font-weight:400;color:#2a2f3b;letter-spacing:-0.371px;">alpha</div>
<div class="r" style="left:1365.20px;top:636.00px;width:18.00px;height:1.20px;background:#262b3d;"></div>
<div class="r" style="left:1494.50px;top:636.00px;width:18.50px;height:1.20px;background:#262b3d;"></div>
<div class="r" style="left:14.00px;top:657.00px;width:1601.50px;height:1.00px;background:#e9ecf0;"></div>
<div class="r" style="left:21.00px;top:672.67px;width:19.00px;height:19.80px;border:1.2px solid #d5d9e0;border-radius:5px;box-sizing:border-box;background:#ebeff5;box-shadow:0 1px 1.5px rgba(0,0,0,.05);"></div>
<div class="t" style="right:1516.47px;top:681.91px;font-size:17.5px;font-weight:400;color:#2a2f3c;letter-spacing:-0.300px;-webkit-text-stroke:0.4px #2a2f3c;">$10.00</div>
<div class="t" style="left:136.40px;top:681.91px;font-size:17.5px;font-weight:400;color:#414552;letter-spacing:-1.405px;">USD</div>
<div class="r" style="left:185.50px;top:670.90px;width:75.00px;height:23.20px;background:#fff1f4;border:1px solid #f6c9d3;border-radius:5px;box-sizing:border-box;"></div>
<div class="t" style="left:193.20px;top:683.12px;font-size:14px;font-weight:400;color:#ab1044;letter-spacing:0.131px;">Failed</div>
<svg class="r" style="left:238px;top:676.95px" width="14" height="13" viewBox="0 0 14 13"><path d="M1.3 1L12.3 12M12.3 1L1.3 12" stroke="#df1b41" stroke-width="2.1" stroke-linecap="round"/></svg>
<svg class="r" style="left:324px;top:668.35px" width="25" height="25" viewBox="0 0 25 25"><rect width="25" height="25" rx="3" fill="#00d66f"/><path d="M8.3 5.1L12.3 5.1Q16 8.6 19 12.3Q15.8 16 12.3 19.6L8 19.6Q12 15.6 13.4 12.3Q12.2 8.8 8.3 5.1Z" fill="#011e0f"/></svg>
<div class="t" style="left:358.70px;top:681.91px;font-size:17.5px;font-weight:400;color:#474c5b;letter-spacing:-0.318px;">Link</div>
<div class="t" style="left:487.20px;top:681.91px;font-size:17.5px;font-weight:400;color:#353a44;">Subscription update</div>
<div class="r" style="left:755.0px;top:674.2px;width:155.0px;height:18px;border-radius:6px;overflow:hidden;background:#e3e5e9;display:flex;flex-direction:column"><div style="display:flex;height:50%"><div style="flex:1;background:rgb(234,235,239)"></div><div style="flex:1;background:rgb(226,227,231)"></div><div style="flex:1;background:rgb(234,235,239)"></div><div style="flex:1;background:rgb(242,243,247)"></div><div style="flex:1;background:rgb(216,217,221)"></div><div style="flex:1;background:rgb(216,217,221)"></div><div style="flex:1;background:rgb(226,227,231)"></div><div style="flex:1;background:rgb(234,235,239)"></div><div style="flex:1;background:rgb(242,243,247)"></div><div style="flex:1;background:rgb(234,235,239)"></div><div style="flex:1;background:rgb(226,227,231)"></div><div style="flex:1;background:rgb(226,227,231)"></div><div style="flex:1;background:rgb(222,223,227)"></div><div style="flex:1;background:rgb(242,243,247)"></div><div style="flex:1;background:rgb(226,227,231)"></div><div style="flex:1;background:rgb(222,223,227)"></div><div style="flex:1;background:rgb(242,243,247)"></div></div><div style="display:flex;height:50%"><div style="flex:1;background:rgb(198,199,203)"></div><div style="flex:1;background:rgb(190,191,195)"></div><div style="flex:1;background:rgb(218,219,223)"></div><div style="flex:1;background:rgb(208,209,213)"></div><div style="flex:1;background:rgb(204,205,209)"></div><div style="flex:1;background:rgb(198,199,203)"></div><div style="flex:1;background:rgb(224,225,229)"></div><div style="flex:1;background:rgb(208,209,213)"></div><div style="flex:1;background:rgb(212,213,217)"></div><div style="flex:1;background:rgb(208,209,213)"></div><div style="flex:1;background:rgb(224,225,229)"></div><div style="flex:1;background:rgb(208,209,213)"></div><div style="flex:1;background:rgb(208,209,213)"></div><div style="flex:1;background:rgb(224,225,229)"></div><div style="flex:1;background:rgb(218,219,223)"></div><div style="flex:1;background:rgb(198,199,203)"></div><div style="flex:1;background:rgb(218,219,223)"></div></div></div>
<div class="t" style="left:909.00px;top:681.91px;font-size:17.5px;font-weight:400;color:#353a44;letter-spacing:-0.150px;">nail.com</div>
<div class="t" style="left:1019.40px;top:681.91px;font-size:17.5px;font-weight:400;color:#21252c;letter-spacing:-0.270px;">Mar 14, 4:39 PM</div>
<div class="t" style="left:1186.80px;top:681.91px;font-size:17.5px;font-weight:400;color:#2a2f3b;letter-spacing:-0.371px;">alpha</div>
<div class="r" style="left:1365.20px;top:682.00px;width:18.00px;height:1.20px;background:#262b3d;"></div>
<div class="r" style="left:1494.50px;top:682.00px;width:18.50px;height:1.20px;background:#262b3d;"></div>
<div class="r" style="left:14.00px;top:704.00px;width:1601.50px;height:1.00px;background:#e9ecf0;"></div>
<div class="r" style="left:21.00px;top:718.92px;width:19.00px;height:19.80px;border:1.2px solid #d5d9e0;border-radius:5px;box-sizing:border-box;background:#fff;box-shadow:0 1px 1.5px rgba(0,0,0,.05);"></div>
<div class="t" style="right:1515.47px;top:728.16px;font-size:17.5px;font-weight:400;color:#2a2f3c;letter-spacing:-0.300px;-webkit-text-stroke:0.4px #2a2f3c;">$5.39</div>
<div class="t" style="left:136.40px;top:728.16px;font-size:17.5px;font-weight:400;color:#414552;letter-spacing:-1.405px;">USD</div>
<div class="r" style="left:185.20px;top:717.15px;width:108.50px;height:23.20px;background:#ecfbe0;border:1px solid #a8e28c;border-radius:5px;box-sizing:border-box;"></div>
<div class="t" style="left:193.70px;top:729.37px;font-size:14px;font-weight:400;color:#2a7a1a;letter-spacing:0.116px;">Succeeded</div>
<svg class="r" style="left:269.5px;top:723.20px" width="16" height="12" viewBox="0 0 16 12"><path d="M1.3 6.3l4.1 4.1L14.7 1.2" stroke="#238b09" stroke-width="2.3" fill="none" stroke-linecap="round" stroke-linejoin="round"/></svg>
<div class="r" style="left:324px;top:714.60px;width:25px;height:24.5px;background:#f6f8fa;border-radius:3px"></div>
<svg class="r" style="left:325.6px;top:716.40px" width="21" height="20" viewBox="0 0 19 18"><path d="M9.3 1.8C5 1.8 1.6 4.6 1.6 8c0 1.9 1 3.6 2.7 4.7l-.8 2.9 3.2-1.7c.8.2 1.7.4 2.6.4 4.3 0 7.7-2.8 7.7-6.3S13.6 1.8 9.3 1.8z" fill="#1aad19"/><path d="M5.4 7.3l2.2 2.1 6-3.6" stroke="#fff" stroke-width="1.9" fill="none" stroke-linecap="round"/></svg>
<div class="t" style="left:359.30px;top:728.16px;font-size:17.5px;font-weight:400;color:#474c5b;letter-spacing:-0.774px;">WeChat Pay</div>
<div class="t" style="left:486.00px;top:728.58px;font-size:14.55px;font-weight:400;color:#30343f;font-family:'Liberation Mono', monospace;-webkit-text-stroke:0.25px #30343f;">pi_3</div>
<div class="r" style="left:521.8px;top:720.3px;width:202.2px;height:18px;border-radius:3px;overflow:hidden;background:#e3e5e9;display:flex;flex-direction:column"><div style="display:flex;height:50%"><div style="flex:1;background:rgb(226,227,231)"></div><div style="flex:1;background:rgb(226,227,231)"></div><div style="flex:1;background:rgb(238,239,243)"></div><div style="flex:1;background:rgb(230,231,235)"></div><div style="flex:1;background:rgb(222,223,227)"></div><div style="flex:1;background:rgb(216,217,221)"></div><div style="flex:1;background:rgb(242,243,247)"></div><div style="flex:1;background:rgb(226,227,231)"></div><div style="flex:1;background:rgb(242,243,247)"></div><div style="flex:1;background:rgb(216,217,221)"></div><div style="flex:1;background:rgb(238,239,243)"></div><div style="flex:1;background:rgb(216,217,221)"></div><div style="flex:1;background:rgb(222,223,227)"></div><div style="flex:1;background:rgb(230,231,235)"></div><div style="flex:1;background:rgb(238,239,243)"></div><div style="flex:1;background:rgb(226,227,231)"></div><div style="flex:1;background:rgb(216,217,221)"></div><div style="flex:1;background:rgb(226,227,231)"></div><div style="flex:1;background:rgb(226,227,231)"></div><div style="flex:1;background:rgb(226,227,231)"></div><div style="flex:1;background:rgb(226,227,231)"></div><div style="flex:1;background:rgb(222,223,227)"></div></div><div style="display:flex;height:50%"><div style="flex:1;background:rgb(212,213,217)"></div><div style="flex:1;background:rgb(224,225,229)"></div><div style="flex:1;background:rgb(190,191,195)"></div><div style="flex:1;background:rgb(224,225,229)"></div><div style="flex:1;background:rgb(212,213,217)"></div><div style="flex:1;background:rgb(208,209,213)"></div><div style="flex:1;background:rgb(212,213,217)"></div><div style="flex:1;background:rgb(208,209,213)"></div><div style="flex:1;background:rgb(208,209,213)"></div><div style="flex:1;background:rgb(204,205,209)"></div><div style="flex:1;background:rgb(198,199,203)"></div><div style="flex:1;background:rgb(218,219,223)"></div><div style="flex:1;background:rgb(224,225,229)"></div><div style="flex:1;background:rgb(204,205,209)"></div><div style="flex:1;background:rgb(212,213,217)"></div><div style="flex:1;background:rgb(224,225,229)"></div><div style="flex:1;background:rgb(212,213,217)"></div><div style="flex:1;background:rgb(204,205,209)"></div><div style="flex:1;background:rgb(190,191,195)"></div><div style="flex:1;background:rgb(198,199,203)"></div><div style="flex:1;background:rgb(190,191,195)"></div><div style="flex:1;background:rgb(190,191,195)"></div></div></div>
<div class="t" style="left:724.00px;top:728.58px;font-size:14.55px;font-weight:400;color:#30343f;font-family:'Liberation Mono', monospace;-webkit-text-stroke:0.25px #30343f;">J</div>
<div class="r" style="left:757.0px;top:720.4px;width:137.0px;height:18px;border-radius:6px;overflow:hidden;background:#e3e5e9;display:flex;flex-direction:column"><div style="display:flex;height:50%"><div style="flex:1;background:rgb(234,235,239)"></div><div style="flex:1;background:rgb(222,223,227)"></div><div style="flex:1;background:rgb(234,235,239)"></div><div style="flex:1;background:rgb(242,243,247)"></div><div style="flex:1;background:rgb(226,227,231)"></div><div style="flex:1;background:rgb(216,217,221)"></div><div style="flex:1;background:rgb(238,239,243)"></div><div style="flex:1;background:rgb(226,227,231)"></div><div style="flex:1;background:rgb(242,243,247)"></div><div style="flex:1;background:rgb(222,223,227)"></div><div style="flex:1;background:rgb(230,231,235)"></div><div style="flex:1;background:rgb(242,243,247)"></div><div style="flex:1;background:rgb(238,239,243)"></div><div style="flex:1;background:rgb(238,239,243)"></div><div style="flex:1;background:rgb(234,235,239)"></div></div><div style="display:flex;height:50%"><div style="flex:1;background:rgb(198,199,203)"></div><div style="flex:1;background:rgb(190,191,195)"></div><div style="flex:1;background:rgb(204,205,209)"></div><div style="flex:1;background:rgb(208,209,213)"></div><div style="flex:1;background:rgb(218,219,223)"></div><div style="flex:1;background:rgb(198,199,203)"></div><div style="flex:1;background:rgb(212,213,217)"></div><div style="flex:1;background:rgb(208,209,213)"></div><div style="flex:1;background:rgb(208,209,213)"></div><div style="flex:1;background:rgb(218,219,223)"></div><div style="flex:1;background:rgb(218,219,223)"></div><div style="flex:1;background:rgb(198,199,203)"></div><div style="flex:1;background:rgb(224,225,229)"></div><div style="flex:1;background:rgb(204,205,209)"></div><div style="flex:1;background:rgb(204,205,209)"></div></div></div>
<div class="t" style="left:893.00px;top:728.16px;font-size:17.5px;font-weight:400;color:#353a44;letter-spacing:-0.150px;">m</div>
<div class="t" style="left:1019.40px;top:728.16px;font-size:17.5px;font-weight:400;color:#21252c;letter-spacing:-0.270px;">Mar 14, 4:38 PM</div>
<div class="t" style="left:1186.80px;top:728.16px;font-size:17.5px;font-weight:400;color:#2a2f3b;letter-spacing:-0.371px;">alpha</div>
<div class="r" style="left:1365.20px;top:729.00px;width:18.00px;height:1.20px;background:#262b3d;"></div>
<div class="r" style="left:1494.50px;top:729.00px;width:18.50px;height:1.20px;background:#262b3d;"></div>
<div class="r" style="left:14.00px;top:750.00px;width:1601.50px;height:1.00px;background:#e9ecf0;"></div>
<div class="r" style="left:21.00px;top:765.17px;width:19.00px;height:19.80px;border:1.2px solid #d5d9e0;border-radius:5px;box-sizing:border-box;background:#fff;box-shadow:0 1px 1.5px rgba(0,0,0,.05);"></div>
<div class="t" style="right:1516.47px;top:774.41px;font-size:17.5px;font-weight:400;color:#2a2f3c;letter-spacing:-0.300px;-webkit-text-stroke:0.4px #2a2f3c;">$100.00</div>
<div class="t" style="left:136.40px;top:774.41px;font-size:17.5px;font-weight:400;color:#414552;letter-spacing:-1.405px;">USD</div>
<div class="r" style="left:185.20px;top:763.40px;width:108.50px;height:23.20px;background:#ecfbe0;border:1px solid #a8e28c;border-radius:5px;box-sizing:border-box;"></div>
<div class="t" style="left:193.70px;top:775.62px;font-size:14px;font-weight:400;color:#2a7a1a;letter-spacing:0.116px;">Succeeded</div>
<svg class="r" style="left:269.5px;top:769.45px" width="16" height="12" viewBox="0 0 16 12"><path d="M1.3 6.3l4.1 4.1L14.7 1.2" stroke="#238b09" stroke-width="2.3" fill="none" stroke-linecap="round" stroke-linejoin="round"/></svg>
<svg class="r" style="left:324px;top:760.85px" width="25" height="25" viewBox="0 0 25 25"><rect width="25" height="25" rx="3" fill="#00d66f"/><path d="M8.3 5.1L12.3 5.1Q16 8.6 19 12.3Q15.8 16 12.3 19.6L8 19.6Q12 15.6 13.4 12.3Q12.2 8.8 8.3 5.1Z" fill="#011e0f"/></svg>
<div class="t" style="left:358.70px;top:774.41px;font-size:17.5px;font-weight:400;color:#474c5b;letter-spacing:-0.318px;">Link</div>
<div class="t" style="left:486.00px;top:774.83px;font-size:14.55px;font-weight:400;color:#30343f;font-family:'Liberation Mono', monospace;-webkit-text-stroke:0.25px #30343f;">pi_3T</div>
<div class="r" style="left:530.0px;top:766.6px;width:198.0px;height:18px;border-radius:3px;overflow:hidden;background:#e3e5e9;display:flex;flex-direction:column"><div style="display:flex;height:50%"><div style="flex:1;background:rgb(226,227,231)"></div><div style="flex:1;background:rgb(222,223,227)"></div><div style="flex:1;background:rgb(230,231,235)"></div><div style="flex:1;background:rgb(230,231,235)"></div><div style="flex:1;background:rgb(234,235,239)"></div><div style="flex:1;background:rgb(216,217,221)"></div><div style="flex:1;background:rgb(216,217,221)"></div><div style="flex:1;background:rgb(222,223,227)"></div><div style="flex:1;background:rgb(234,235,239)"></div><div style="flex:1;background:rgb(230,231,235)"></div><div style="flex:1;background:rgb(226,227,231)"></div><div style="flex:1;background:rgb(234,235,239)"></div><div style="flex:1;background:rgb(234,235,239)"></div><div style="flex:1;background:rgb(216,217,221)"></div><div style="flex:1;background:rgb(242,243,247)"></div><div style="flex:1;background:rgb(222,223,227)"></div><div style="flex:1;background:rgb(230,231,235)"></div><div style="flex:1;background:rgb(234,235,239)"></div><div style="flex:1;background:rgb(226,227,231)"></div><div style="flex:1;background:rgb(230,231,235)"></div><div style="flex:1;background:rgb(242,243,247)"></div><div style="flex:1;background:rgb(238,239,243)"></div></div><div style="display:flex;height:50%"><div style="flex:1;background:rgb(198,199,203)"></div><div style="flex:1;background:rgb(204,205,209)"></div><div style="flex:1;background:rgb(218,219,223)"></div><div style="flex:1;background:rgb(212,213,217)"></div><div style="flex:1;background:rgb(212,213,217)"></div><div style="flex:1;background:rgb(204,205,209)"></div><div style="flex:1;background:rgb(190,191,195)"></div><div style="flex:1;background:rgb(212,213,217)"></div><div style="flex:1;background:rgb(198,199,203)"></div><div style="flex:1;background:rgb(218,219,223)"></div><div style="flex:1;background:rgb(224,225,229)"></div><div style="flex:1;background:rgb(190,191,195)"></div><div style="flex:1;background:rgb(218,219,223)"></div><div style="flex:1;background:rgb(204,205,209)"></div><div style="flex:1;background:rgb(212,213,217)"></div><div style="flex:1;background:rgb(198,199,203)"></div><div style="flex:1;background:rgb(198,199,203)"></div><div style="flex:1;background:rgb(212,213,217)"></div><div style="flex:1;background:rgb(218,219,223)"></div><div style="flex:1;background:rgb(198,199,203)"></div><div style="flex:1;background:rgb(208,209,213)"></div><div style="flex:1;background:rgb(224,225,229)"></div></div></div>
<div class="r" style="left:756.0px;top:766.7px;width:141.0px;height:18px;border-radius:6px;overflow:hidden;background:#e3e5e9;display:flex;flex-direction:column"><div style="display:flex;height:50%"><div style="flex:1;background:rgb(216,217,221)"></div><div style="flex:1;background:rgb(238,239,243)"></div><div style="flex:1;background:rgb(234,235,239)"></div><div style="flex:1;background:rgb(234,235,239)"></div><div style="flex:1;background:rgb(234,235,239)"></div><div style="flex:1;background:rgb(242,243,247)"></div><div style="flex:1;background:rgb(238,239,243)"></div><div style="flex:1;background:rgb(226,227,231)"></div><div style="flex:1;background:rgb(238,239,243)"></div><div style="flex:1;background:rgb(234,235,239)"></div><div style="flex:1;background:rgb(216,217,221)"></div><div style="flex:1;background:rgb(234,235,239)"></div><div style="flex:1;background:rgb(226,227,231)"></div><div style="flex:1;background:rgb(242,243,247)"></div><div style="flex:1;background:rgb(226,227,231)"></div></div><div style="display:flex;height:50%"><div style="flex:1;background:rgb(204,205,209)"></div><div style="flex:1;background:rgb(212,213,217)"></div><div style="flex:1;background:rgb(224,225,229)"></div><div style="flex:1;background:rgb(198,199,203)"></div><div style="flex:1;background:rgb(212,213,217)"></div><div style="flex:1;background:rgb(224,225,229)"></div><div style="flex:1;background:rgb(224,225,229)"></div><div style="flex:1;background:rgb(224,225,229)"></div><div style="flex:1;background:rgb(204,205,209)"></div><div style="flex:1;background:rgb(224,225,229)"></div><div style="flex:1;background:rgb(198,199,203)"></div><div style="flex:1;background:rgb(212,213,217)"></div><div style="flex:1;background:rgb(204,205,209)"></div><div style="flex:1;background:rgb(218,219,223)"></div><div style="flex:1;background:rgb(208,209,213)"></div></div></div>
<div class="t" style="left:896.00px;top:774.41px;font-size:17.5px;font-weight:400;color:#353a44;letter-spacing:-0.150px;">ng.io</div>
<div class="t" style="left:1019.40px;top:774.41px;font-size:17.5px;font-weight:400;color:#21252c;letter-spacing:-0.270px;">Mar 14, 4:04 PM</div>
<div class="t" style="left:1186.80px;top:774.41px;font-size:17.5px;font-weight:400;color:#2a2f3b;letter-spacing:-0.371px;">alpha</div>
<div class="r" style="left:1365.20px;top:775.00px;width:18.00px;height:1.20px;background:#262b3d;"></div>
<div class="r" style="left:1494.50px;top:775.00px;width:18.50px;height:1.20px;background:#262b3d;"></div>
<div class="r" style="left:14.00px;top:796.00px;width:1601.50px;height:1.00px;background:#e9ecf0;"></div>
<div class="r" style="left:21.00px;top:811.42px;width:19.00px;height:19.80px;border:1.2px solid #d5d9e0;border-radius:5px;box-sizing:border-box;background:#fff;box-shadow:0 1px 1.5px rgba(0,0,0,.05);"></div>
<div class="t" style="right:1516.47px;top:820.66px;font-size:17.5px;font-weight:400;color:#2a2f3c;letter-spacing:-0.300px;-webkit-text-stroke:0.4px #2a2f3c;">$12.00</div>
<div class="t" style="left:136.40px;top:820.66px;font-size:17.5px;font-weight:400;color:#414552;letter-spacing:-1.405px;">USD</div>
<div class="r" style="left:185.20px;top:809.65px;width:108.50px;height:23.20px;background:#ecfbe0;border:1px solid #a8e28c;border-radius:5px;box-sizing:border-box;"></div>
<div class="t" style="left:193.70px;top:821.87px;font-size:14px;font-weight:400;color:#2a7a1a;letter-spacing:0.116px;">Succeeded</div>
<svg class="r" style="left:269.5px;top:815.70px" width="16" height="12" viewBox="0 0 16 12"><path d="M1.3 6.3l4.1 4.1L14.7 1.2" stroke="#238b09" stroke-width="2.3" fill="none" stroke-linecap="round" stroke-linejoin="round"/></svg>
<svg class="r" style="left:324px;top:807.10px" width="25" height="25" viewBox="0 0 25 25"><rect width="25" height="25" rx="3" fill="#000"/><circle cx="9.6" cy="12.2" r="5.6" fill="#eb001b"/><circle cx="15.4" cy="12.2" r="5.6" fill="#f79e1b"/><path d="M12.5 7.55a5.6 5.6 0 0 1 0 9.3a5.6 5.6 0 0 1 0-9.3z" fill="#ff5f00"/></svg>
<div class="r" style="left:360.00px;top:818.88px;width:4.50px;height:4.50px;background:#3d4250;border-radius:50%;"></div>
<div class="r" style="left:367.07px;top:818.88px;width:4.50px;height:4.50px;background:#3d4250;border-radius:50%;"></div>
<div class="r" style="left:374.14px;top:818.88px;width:4.50px;height:4.50px;background:#3d4250;border-radius:50%;"></div>
<div class="r" style="left:381.21px;top:818.88px;width:4.50px;height:4.50px;background:#3d4250;border-radius:50%;"></div>
<div class="r" style="left:393.0px;top:812.6px;width:38.0px;height:18px;border-radius:3px;overflow:hidden;background:#e3e5e9;display:flex;flex-direction:column"><div style="display:flex;height:50%"><div style="flex:1;background:rgb(208,209,213)"></div><div style="flex:1;background:rgb(190,191,195)"></div><div style="flex:1;background:rgb(218,219,223)"></div><div style="flex:1;background:rgb(212,213,217)"></div></div><div style="display:flex;height:50%"><div style="flex:1;background:rgb(230,231,235)"></div><div style="flex:1;background:rgb(234,235,239)"></div><div style="flex:1;background:rgb(238,239,243)"></div><div style="flex:1;background:rgb(216,217,221)"></div></div></div>
<div class="t" style="left:486.00px;top:821.08px;font-size:14.55px;font-weight:400;color:#30343f;font-family:'Liberation Mono', monospace;-webkit-text-stroke:0.25px #30343f;">pi_3T</div>
<div class="r" style="left:530.0px;top:812.8px;width:198.0px;height:18px;border-radius:3px;overflow:hidden;background:#e3e5e9;display:flex;flex-direction:column"><div style="display:flex;height:50%"><div style="flex:1;background:rgb(234,235,239)"></div><div style="flex:1;background:rgb(222,223,227)"></div><div style="flex:1;background:rgb(234,235,239)"></div><div style="flex:1;background:rgb(242,243,247)"></div><div style="flex:1;background:rgb(226,227,231)"></div><div style="flex:1;background:rgb(216,217,221)"></div><div style="flex:1;background:rgb(238,239,243)"></div><div style="flex:1;background:rgb(226,227,231)"></div><div style="flex:1;background:rgb(242,243,247)"></div><div style="flex:1;background:rgb(222,223,227)"></div><div style="flex:1;background:rgb(230,231,235)"></div><div style="flex:1;background:rgb(242,243,247)"></div><div style="flex:1;background:rgb(238,239,243)"></div><div style="flex:1;background:rgb(238,239,243)"></div><div style="flex:1;background:rgb(234,235,239)"></div><div style="flex:1;background:rgb(222,223,227)"></div><div style="flex:1;background:rgb(216,217,221)"></div><div style="flex:1;background:rgb(226,227,231)"></div><div style="flex:1;background:rgb(230,231,235)"></div><div style="flex:1;background:rgb(238,239,243)"></div><div style="flex:1;background:rgb(222,223,227)"></div><div style="flex:1;background:rgb(234,235,239)"></div></div><div style="display:flex;height:50%"><div style="flex:1;background:rgb(208,209,213)"></div><div style="flex:1;background:rgb(208,209,213)"></div><div style="flex:1;background:rgb(218,219,223)"></div><div style="flex:1;background:rgb(218,219,223)"></div><div style="flex:1;background:rgb(198,199,203)"></div><div style="flex:1;background:rgb(224,225,229)"></div><div style="flex:1;background:rgb(204,205,209)"></div><div style="flex:1;background:rgb(204,205,209)"></div><div style="flex:1;background:rgb(224,225,229)"></div><div style="flex:1;background:rgb(224,225,229)"></div><div style="flex:1;background:rgb(208,209,213)"></div><div style="flex:1;background:rgb(190,191,195)"></div><div style="flex:1;background:rgb(208,209,213)"></div><div style="flex:1;background:rgb(224,225,229)"></div><div style="flex:1;background:rgb(190,191,195)"></div><div style="flex:1;background:rgb(212,213,217)"></div><div style="flex:1;background:rgb(218,219,223)"></div><div style="flex:1;background:rgb(208,209,213)"></div><div style="flex:1;background:rgb(212,213,217)"></div><div style="flex:1;background:rgb(190,191,195)"></div><div style="flex:1;background:rgb(212,213,217)"></div><div style="flex:1;background:rgb(212,213,217)"></div></div></div>
<div class="t" style="left:758.50px;top:820.66px;font-size:17.5px;font-weight:400;color:#353a44;">l</div>
<div class="r" style="left:762.0px;top:812.9px;width:135.0px;height:18px;border-radius:6px;overflow:hidden;background:#e3e5e9;display:flex;flex-direction:column"><div style="display:flex;height:50%"><div style="flex:1;background:rgb(230,231,235)"></div><div style="flex:1;background:rgb(230,231,235)"></div><div style="flex:1;background:rgb(238,239,243)"></div><div style="flex:1;background:rgb(222,223,227)"></div><div style="flex:1;background:rgb(242,243,247)"></div><div style="flex:1;background:rgb(226,227,231)"></div><div style="flex:1;background:rgb(222,223,227)"></div><div style="flex:1;background:rgb(222,223,227)"></div><div style="flex:1;background:rgb(222,223,227)"></div><div style="flex:1;background:rgb(242,243,247)"></div><div style="flex:1;background:rgb(222,223,227)"></div><div style="flex:1;background:rgb(238,239,243)"></div><div style="flex:1;background:rgb(234,235,239)"></div><div style="flex:1;background:rgb(230,231,235)"></div><div style="flex:1;background:rgb(230,231,235)"></div></div><div style="display:flex;height:50%"><div style="flex:1;background:rgb(204,205,209)"></div><div style="flex:1;background:rgb(198,199,203)"></div><div style="flex:1;background:rgb(190,191,195)"></div><div style="flex:1;background:rgb(198,199,203)"></div><div style="flex:1;background:rgb(198,199,203)"></div><div style="flex:1;background:rgb(190,191,195)"></div><div style="flex:1;background:rgb(208,209,213)"></div><div style="flex:1;background:rgb(190,191,195)"></div><div style="flex:1;background:rgb(212,213,217)"></div><div style="flex:1;background:rgb(208,209,213)"></div><div style="flex:1;background:rgb(208,209,213)"></div><div style="flex:1;background:rgb(224,225,229)"></div><div style="flex:1;background:rgb(190,191,195)"></div><div style="flex:1;background:rgb(212,213,217)"></div><div style="flex:1;background:rgb(224,225,229)"></div></div></div>
<div class="t" style="left:896.00px;top:820.66px;font-size:17.5px;font-weight:400;color:#353a44;letter-spacing:-0.150px;">.com</div>
<div class="t" style="left:1019.40px;top:820.66px;font-size:17.5px;font-weight:400;color:#21252c;letter-spacing:-0.270px;">Mar 14, 3:55 PM</div>
<div class="t" style="left:1186.80px;top:820.66px;font-size:17.5px;font-weight:400;color:#2a2f3b;letter-spacing:-0.371px;">alpha</div>
<div class="r" style="left:1365.20px;top:821.00px;width:18.00px;height:1.20px;background:#262b3d;"></div>
<div class="r" style="left:1494.50px;top:821.00px;width:18.50px;height:1.20px;background:#262b3d;"></div>
<div class="r" style="left:14.00px;top:842.00px;width:1601.50px;height:1.00px;background:#e9ecf0;"></div>
<div class="r" style="left:21.00px;top:857.67px;width:19.00px;height:19.80px;border:1.2px solid #d5d9e0;border-radius:5px;box-sizing:border-box;background:#fff;box-shadow:0 1px 1.5px rgba(0,0,0,.05);"></div>
<div class="t" style="right:1516.47px;top:866.91px;font-size:17.5px;font-weight:400;color:#2a2f3c;letter-spacing:-0.300px;-webkit-text-stroke:0.4px #2a2f3c;">$10.00</div>
<div class="t" style="left:136.40px;top:866.91px;font-size:17.5px;font-weight:400;color:#414552;letter-spacing:-1.405px;">USD</div>
<div class="r" style="left:185.20px;top:855.90px;width:108.50px;height:23.20px;background:#ecfbe0;border:1px solid #a8e28c;border-radius:5px;box-sizing:border-box;"></div>
<div class="t" style="left:193.70px;top:868.12px;font-size:14px;font-weight:400;color:#2a7a1a;letter-spacing:0.116px;">Succeeded</div>
<svg class="r" style="left:269.5px;top:861.95px" width="16" height="12" viewBox="0 0 16 12"><path d="M1.3 6.3l4.1 4.1L14.7 1.2" stroke="#238b09" stroke-width="2.3" fill="none" stroke-linecap="round" stroke-linejoin="round"/></svg>
<svg class="r" style="left:324px;top:853.35px" width="25" height="25" viewBox="0 0 25 25"><rect width="25" height="25" rx="3" fill="#000"/><circle cx="9.6" cy="12.2" r="5.6" fill="#eb001b"/><circle cx="15.4" cy="12.2" r="5.6" fill="#f79e1b"/><path d="M12.5 7.55a5.6 5.6 0 0 1 0 9.3a5.6 5.6 0 0 1 0-9.3z" fill="#ff5f00"/></svg>
<div class="r" style="left:360.00px;top:865.12px;width:4.50px;height:4.50px;background:#3d4250;border-radius:50%;"></div>
<div class="r" style="left:367.07px;top:865.12px;width:4.50px;height:4.50px;background:#3d4250;border-radius:50%;"></div>
<div class="r" style="left:374.14px;top:865.12px;width:4.50px;height:4.50px;background:#3d4250;border-radius:50%;"></div>
<div class="r" style="left:381.21px;top:865.12px;width:4.50px;height:4.50px;background:#3d4250;border-radius:50%;"></div>
<div class="r" style="left:393.0px;top:858.9px;width:38.0px;height:18px;border-radius:3px;overflow:hidden;background:#e3e5e9;display:flex;flex-direction:column"><div style="display:flex;height:50%"><div style="flex:1;background:rgb(204,205,209)"></div><div style="flex:1;background:rgb(212,213,217)"></div><div style="flex:1;background:rgb(212,213,217)"></div><div style="flex:1;background:rgb(224,225,229)"></div></div><div style="display:flex;height:50%"><div style="flex:1;background:rgb(216,217,221)"></div><div style="flex:1;background:rgb(226,227,231)"></div><div style="flex:1;background:rgb(222,223,227)"></div><div style="flex:1;background:rgb(242,243,247)"></div></div></div>
<div class="t" style="left:487.20px;top:866.91px;font-size:17.5px;font-weight:400;color:#353a44;">Subscription creation</div>
<div class="r" style="left:756.5px;top:859.2px;width:176.5px;height:18px;border-radius:6px;overflow:hidden;background:#e3e5e9;display:flex;flex-direction:column"><div style="display:flex;height:50%"><div style="flex:1;background:rgb(226,227,231)"></div><div style="flex:1;background:rgb(230,231,235)"></div><div style="flex:1;background:rgb(238,239,243)"></div><div style="flex:1;background:rgb(242,243,247)"></div><div style="flex:1;background:rgb(242,243,247)"></div><div style="flex:1;background:rgb(242,243,247)"></div><div style="flex:1;background:rgb(238,239,243)"></div><div style="flex:1;background:rgb(242,243,247)"></div><div style="flex:1;background:rgb(234,235,239)"></div><div style="flex:1;background:rgb(234,235,239)"></div><div style="flex:1;background:rgb(226,227,231)"></div><div style="flex:1;background:rgb(242,243,247)"></div><div style="flex:1;background:rgb(222,223,227)"></div><div style="flex:1;background:rgb(230,231,235)"></div><div style="flex:1;background:rgb(238,239,243)"></div><div style="flex:1;background:rgb(238,239,243)"></div><div style="flex:1;background:rgb(216,217,221)"></div><div style="flex:1;background:rgb(226,227,231)"></div><div style="flex:1;background:rgb(238,239,243)"></div></div><div style="display:flex;height:50%"><div style="flex:1;background:rgb(190,191,195)"></div><div style="flex:1;background:rgb(198,199,203)"></div><div style="flex:1;background:rgb(218,219,223)"></div><div style="flex:1;background:rgb(208,209,213)"></div><div style="flex:1;background:rgb(198,199,203)"></div><div style="flex:1;background:rgb(208,209,213)"></div><div style="flex:1;background:rgb(224,225,229)"></div><div style="flex:1;background:rgb(218,219,223)"></div><div style="flex:1;background:rgb(218,219,223)"></div><div style="flex:1;background:rgb(198,199,203)"></div><div style="flex:1;background:rgb(218,219,223)"></div><div style="flex:1;background:rgb(198,199,203)"></div><div style="flex:1;background:rgb(190,191,195)"></div><div style="flex:1;background:rgb(212,213,217)"></div><div style="flex:1;background:rgb(212,213,217)"></div><div style="flex:1;background:rgb(218,219,223)"></div><div style="flex:1;background:rgb(190,191,195)"></div><div style="flex:1;background:rgb(208,209,213)"></div><div style="flex:1;background:rgb(198,199,203)"></div></div></div>
<div class="t" style="left:933.00px;top:866.91px;font-size:17.5px;font-weight:400;color:#353a44;letter-spacing:-0.150px;">ail.com</div>
<div class="t" style="left:1019.40px;top:866.91px;font-size:17.5px;font-weight:400;color:#21252c;letter-spacing:-0.270px;">Mar 14, 2:17 PM</div>
<div class="t" style="left:1186.80px;top:866.91px;font-size:17.5px;font-weight:400;color:#2a2f3b;letter-spacing:-0.371px;">alpha</div>
<div class="r" style="left:1365.20px;top:867.00px;width:18.00px;height:1.20px;background:#262b3d;"></div>
<div class="r" style="left:1494.50px;top:867.00px;width:18.50px;height:1.20px;background:#262b3d;"></div>
<div class="r" style="left:14.00px;top:888.00px;width:1601.50px;height:1.00px;background:#e9ecf0;"></div>
<div class="r" style="left:21.00px;top:903.92px;width:19.00px;height:19.80px;border:1.2px solid #d5d9e0;border-radius:5px;box-sizing:border-box;background:#fff;box-shadow:0 1px 1.5px rgba(0,0,0,.05);"></div>
<div class="t" style="right:1516.47px;top:913.16px;font-size:17.5px;font-weight:400;color:#2a2f3c;letter-spacing:-0.300px;-webkit-text-stroke:0.4px #2a2f3c;">$10.00</div>
<div class="t" style="left:136.40px;top:913.16px;font-size:17.5px;font-weight:400;color:#414552;letter-spacing:-1.405px;">USD</div>
<div class="r" style="left:185.20px;top:902.15px;width:108.50px;height:23.20px;background:#ecfbe0;border:1px solid #a8e28c;border-radius:5px;box-sizing:border-box;"></div>
<div class="t" style="left:193.70px;top:914.37px;font-size:14px;font-weight:400;color:#2a7a1a;letter-spacing:0.116px;">Succeeded</div>
<svg class="r" style="left:269.5px;top:908.20px" width="16" height="12" viewBox="0 0 16 12"><path d="M1.3 6.3l4.1 4.1L14.7 1.2" stroke="#238b09" stroke-width="2.3" fill="none" stroke-linecap="round" stroke-linejoin="round"/></svg>
<svg class="r" style="left:324px;top:899.60px" width="25" height="25" viewBox="0 0 25 25"><rect width="25" height="25" rx="3" fill="#000"/><path d="M16.4 13c0-1.7 1.4-2.5 1.5-2.6-.8-1.2-2.1-1.4-2.5-1.4-1.1-.1-2.1.6-2.6.6s-1.4-.6-2.3-.6c-1.2 0-2.3.7-2.9 1.8-1.2 2.2-.3 5.3.9 7 .6.8 1.3 1.8 2.2 1.8.9 0 1.2-.6 2.3-.6s1.4.6 2.3.6c1 0 1.6-.9 2.1-1.7.7-1 .9-1.9.9-2-.1 0-1.9-.7-1.9-2.9zM14.7 7.9c.5-.6.8-1.4.7-2.3-.7 0-1.6.5-2.1 1.1-.5.5-.9 1.4-.8 2.2.8.1 1.6-.4 2.2-1z" fill="#fff"/></svg>
<svg class="r" style="left:354px;top:899.60px" width="25" height="25" viewBox="0 0 25 25"><rect width="25" height="25" rx="3" fill="#000"/><circle cx="9.6" cy="12.2" r="5.6" fill="#eb001b"/><circle cx="15.4" cy="12.2" r="5.6" fill="#f79e1b"/><path d="M12.5 7.55a5.6 5.6 0 0 1 0 9.3a5.6 5.6 0 0 1 0-9.3z" fill="#ff5f00"/></svg>
<div class="r" style="left:390.80px;top:911.38px;width:4.50px;height:4.50px;background:#3d4250;border-radius:50%;"></div>
<div class="r" style="left:397.87px;top:911.38px;width:4.50px;height:4.50px;background:#3d4250;border-radius:50%;"></div>
<div class="r" style="left:404.94px;top:911.38px;width:4.50px;height:4.50px;background:#3d4250;border-radius:50%;"></div>
<div class="r" style="left:412.01px;top:911.38px;width:4.50px;height:4.50px;background:#3d4250;border-radius:50%;"></div>
<div class="r" style="left:418.0px;top:905.1px;width:40.0px;height:18px;border-radius:3px;overflow:hidden;background:#e3e5e9;display:flex;flex-direction:column"><div style="display:flex;height:50%"><div style="flex:1;background:rgb(224,225,229)"></div><div style="flex:1;background:rgb(198,199,203)"></div><div style="flex:1;background:rgb(190,191,195)"></div><div style="flex:1;background:rgb(204,205,209)"></div></div><div style="display:flex;height:50%"><div style="flex:1;background:rgb(238,239,243)"></div><div style="flex:1;background:rgb(238,239,243)"></div><div style="flex:1;background:rgb(242,243,247)"></div><div style="flex:1;background:rgb(226,227,231)"></div></div></div>
<div class="t" style="left:487.20px;top:913.16px;font-size:17.5px;font-weight:400;color:#353a44;">Subscription creation</div>
<div class="r" style="left:758.0px;top:905.4px;width:176.5px;height:18px;border-radius:6px;overflow:hidden;background:#e3e5e9;display:flex;flex-direction:column"><div style="display:flex;height:50%"><div style="flex:1;background:rgb(216,217,221)"></div><div style="flex:1;background:rgb(222,223,227)"></div><div style="flex:1;background:rgb(242,243,247)"></div><div style="flex:1;background:rgb(226,227,231)"></div><div style="flex:1;background:rgb(226,227,231)"></div><div style="flex:1;background:rgb(222,223,227)"></div><div style="flex:1;background:rgb(222,223,227)"></div><div style="flex:1;background:rgb(230,231,235)"></div><div style="flex:1;background:rgb(230,231,235)"></div><div style="flex:1;background:rgb(216,217,221)"></div><div style="flex:1;background:rgb(222,223,227)"></div><div style="flex:1;background:rgb(216,217,221)"></div><div style="flex:1;background:rgb(238,239,243)"></div><div style="flex:1;background:rgb(242,243,247)"></div><div style="flex:1;background:rgb(242,243,247)"></div><div style="flex:1;background:rgb(234,235,239)"></div><div style="flex:1;background:rgb(216,217,221)"></div><div style="flex:1;background:rgb(234,235,239)"></div><div style="flex:1;background:rgb(234,235,239)"></div></div><div style="display:flex;height:50%"><div style="flex:1;background:rgb(190,191,195)"></div><div style="flex:1;background:rgb(212,213,217)"></div><div style="flex:1;background:rgb(218,219,223)"></div><div style="flex:1;background:rgb(204,205,209)"></div><div style="flex:1;background:rgb(218,219,223)"></div><div style="flex:1;background:rgb(204,205,209)"></div><div style="flex:1;background:rgb(208,209,213)"></div><div style="flex:1;background:rgb(224,225,229)"></div><div style="flex:1;background:rgb(190,191,195)"></div><div style="flex:1;background:rgb(218,219,223)"></div><div style="flex:1;background:rgb(224,225,229)"></div><div style="flex:1;background:rgb(218,219,223)"></div><div style="flex:1;background:rgb(218,219,223)"></div><div style="flex:1;background:rgb(204,205,209)"></div><div style="flex:1;background:rgb(198,199,203)"></div><div style="flex:1;background:rgb(208,209,213)"></div><div style="flex:1;background:rgb(218,219,223)"></div><div style="flex:1;background:rgb(190,191,195)"></div><div style="flex:1;background:rgb(224,225,229)"></div></div></div>
<div class="t" style="left:933.50px;top:913.16px;font-size:17.5px;font-weight:400;color:#353a44;letter-spacing:-0.150px;">l.com</div>
<div class="t" style="left:1019.40px;top:913.16px;font-size:17.5px;font-weight:400;color:#21252c;letter-spacing:-0.270px;">Mar 14, 2:00 PM</div>
<div class="t" style="left:1186.80px;top:913.16px;font-size:17.5px;font-weight:400;color:#2a2f3b;letter-spacing:-0.371px;">alpha</div>
<div class="r" style="left:1365.20px;top:914.00px;width:18.00px;height:1.20px;background:#262b3d;"></div>
<div class="r" style="left:1494.50px;top:914.00px;width:18.50px;height:1.20px;background:#262b3d;"></div>
<div class="r" style="left:14.00px;top:935.00px;width:1601.50px;height:1.00px;background:#e9ecf0;"></div>
<div class="r" style="left:21.00px;top:950.17px;width:19.00px;height:19.80px;border:1.2px solid #d5d9e0;border-radius:5px;box-sizing:border-box;background:#fff;box-shadow:0 1px 1.5px rgba(0,0,0,.05);"></div>
<div class="t" style="right:1516.47px;top:959.41px;font-size:17.5px;font-weight:400;color:#2a2f3c;letter-spacing:-0.300px;-webkit-text-stroke:0.4px #2a2f3c;">$12.00</div>
<div class="t" style="left:136.40px;top:959.41px;font-size:17.5px;font-weight:400;color:#414552;letter-spacing:-1.405px;">USD</div>
<div class="r" style="left:185.20px;top:948.40px;width:108.50px;height:23.20px;background:#ecfbe0;border:1px solid #a8e28c;border-radius:5px;box-sizing:border-box;"></div>
<div class="t" style="left:193.70px;top:960.62px;font-size:14px;font-weight:400;color:#2a7a1a;letter-spacing:0.116px;">Succeeded</div>
<svg class="r" style="left:269.5px;top:954.45px" width="16" height="12" viewBox="0 0 16 12"><path d="M1.3 6.3l4.1 4.1L14.7 1.2" stroke="#238b09" stroke-width="2.3" fill="none" stroke-linecap="round" stroke-linejoin="round"/></svg>
<svg class="r" style="left:324px;top:945.85px" width="25" height="25" viewBox="0 0 25 25"><rect width="25" height="25" rx="3" fill="#000"/><circle cx="9.6" cy="12.2" r="5.6" fill="#eb001b"/><circle cx="15.4" cy="12.2" r="5.6" fill="#f79e1b"/><path d="M12.5 7.55a5.6 5.6 0 0 1 0 9.3a5.6 5.6 0 0 1 0-9.3z" fill="#ff5f00"/></svg>
<div class="r" style="left:360.00px;top:957.62px;width:4.50px;height:4.50px;background:#3d4250;border-radius:50%;"></div>
<div class="r" style="left:367.07px;top:957.62px;width:4.50px;height:4.50px;background:#3d4250;border-radius:50%;"></div>
<div class="r" style="left:374.14px;top:957.62px;width:4.50px;height:4.50px;background:#3d4250;border-radius:50%;"></div>
<div class="r" style="left:381.21px;top:957.62px;width:4.50px;height:4.50px;background:#3d4250;border-radius:50%;"></div>
<div class="r" style="left:393.0px;top:951.4px;width:38.0px;height:18px;border-radius:3px;overflow:hidden;background:#e3e5e9;display:flex;flex-direction:column"><div style="display:flex;height:50%"><div style="flex:1;background:rgb(198,199,203)"></div><div style="flex:1;background:rgb(218,219,223)"></div><div style="flex:1;background:rgb(212,213,217)"></div><div style="flex:1;background:rgb(224,225,229)"></div></div><div style="display:flex;height:50%"><div style="flex:1;background:rgb(216,217,221)"></div><div style="flex:1;background:rgb(226,227,231)"></div><div style="flex:1;background:rgb(222,223,227)"></div><div style="flex:1;background:rgb(222,223,227)"></div></div></div>
<div class="t" style="left:486.00px;top:959.83px;font-size:14.55px;font-weight:400;color:#30343f;font-family:'Liberation Mono', monospace;-webkit-text-stroke:0.25px #30343f;">pi_3</div>
<div class="r" style="left:521.8px;top:951.6px;width:206.2px;height:18px;border-radius:3px;overflow:hidden;background:#e3e5e9;display:flex;flex-direction:column"><div style="display:flex;height:50%"><div style="flex:1;background:rgb(234,235,239)"></div><div style="flex:1;background:rgb(222,223,227)"></div><div style="flex:1;background:rgb(234,235,239)"></div><div style="flex:1;background:rgb(222,223,227)"></div><div style="flex:1;background:rgb(222,223,227)"></div><div style="flex:1;background:rgb(238,239,243)"></div><div style="flex:1;background:rgb(234,235,239)"></div><div style="flex:1;background:rgb(230,231,235)"></div><div style="flex:1;background:rgb(216,217,221)"></div><div style="flex:1;background:rgb(242,243,247)"></div><div style="flex:1;background:rgb(238,239,243)"></div><div style="flex:1;background:rgb(238,239,243)"></div><div style="flex:1;background:rgb(230,231,235)"></div><div style="flex:1;background:rgb(230,231,235)"></div><div style="flex:1;background:rgb(238,239,243)"></div><div style="flex:1;background:rgb(216,217,221)"></div><div style="flex:1;background:rgb(230,231,235)"></div><div style="flex:1;background:rgb(238,239,243)"></div><div style="flex:1;background:rgb(216,217,221)"></div><div style="flex:1;background:rgb(230,231,235)"></div><div style="flex:1;background:rgb(242,243,247)"></div><div style="flex:1;background:rgb(234,235,239)"></div></div><div style="display:flex;height:50%"><div style="flex:1;background:rgb(190,191,195)"></div><div style="flex:1;background:rgb(212,213,217)"></div><div style="flex:1;background:rgb(208,209,213)"></div><div style="flex:1;background:rgb(218,219,223)"></div><div style="flex:1;background:rgb(224,225,229)"></div><div style="flex:1;background:rgb(190,191,195)"></div><div style="flex:1;background:rgb(190,191,195)"></div><div style="flex:1;background:rgb(224,225,229)"></div><div style="flex:1;background:rgb(224,225,229)"></div><div style="flex:1;background:rgb(224,225,229)"></div><div style="flex:1;background:rgb(204,205,209)"></div><div style="flex:1;background:rgb(212,213,217)"></div><div style="flex:1;background:rgb(204,205,209)"></div><div style="flex:1;background:rgb(218,219,223)"></div><div style="flex:1;background:rgb(218,219,223)"></div><div style="flex:1;background:rgb(208,209,213)"></div><div style="flex:1;background:rgb(208,209,213)"></div><div style="flex:1;background:rgb(198,199,203)"></div><div style="flex:1;background:rgb(218,219,223)"></div><div style="flex:1;background:rgb(204,205,209)"></div><div style="flex:1;background:rgb(218,219,223)"></div><div style="flex:1;background:rgb(208,209,213)"></div></div></div>
<div class="r" style="left:758.0px;top:951.7px;width:141.0px;height:18px;border-radius:6px;overflow:hidden;background:#e3e5e9;display:flex;flex-direction:column"><div style="display:flex;height:50%"><div style="flex:1;background:rgb(234,235,239)"></div><div style="flex:1;background:rgb(238,239,243)"></div><div style="flex:1;background:rgb(238,239,243)"></div><div style="flex:1;background:rgb(234,235,239)"></div><div style="flex:1;background:rgb(242,243,247)"></div><div style="flex:1;background:rgb(222,223,227)"></div><div style="flex:1;background:rgb(238,239,243)"></div><div style="flex:1;background:rgb(222,223,227)"></div><div style="flex:1;background:rgb(216,217,221)"></div><div style="flex:1;background:rgb(238,239,243)"></div><div style="flex:1;background:rgb(226,227,231)"></div><div style="flex:1;background:rgb(222,223,227)"></div><div style="flex:1;background:rgb(238,239,243)"></div><div style="flex:1;background:rgb(230,231,235)"></div><div style="flex:1;background:rgb(242,243,247)"></div></div><div style="display:flex;height:50%"><div style="flex:1;background:rgb(190,191,195)"></div><div style="flex:1;background:rgb(190,191,195)"></div><div style="flex:1;background:rgb(204,205,209)"></div><div style="flex:1;background:rgb(204,205,209)"></div><div style="flex:1;background:rgb(198,199,203)"></div><div style="flex:1;background:rgb(198,199,203)"></div><div style="flex:1;background:rgb(190,191,195)"></div><div style="flex:1;background:rgb(204,205,209)"></div><div style="flex:1;background:rgb(212,213,217)"></div><div style="flex:1;background:rgb(208,209,213)"></div><div style="flex:1;background:rgb(198,199,203)"></div><div style="flex:1;background:rgb(208,209,213)"></div><div style="flex:1;background:rgb(208,209,213)"></div><div style="flex:1;background:rgb(224,225,229)"></div><div style="flex:1;background:rgb(198,199,203)"></div></div></div>
<div class="t" style="left:899.00px;top:959.41px;font-size:17.5px;font-weight:400;color:#353a44;letter-spacing:-0.150px;">com</div>
<div class="t" style="left:1019.40px;top:959.41px;font-size:17.5px;font-weight:400;color:#21252c;letter-spacing:-0.270px;">Mar 14, 1:23 PM</div>
<div class="t" style="left:1186.80px;top:959.41px;font-size:17.5px;font-weight:400;color:#2a2f3b;letter-spacing:-0.371px;">alpha</div>
<div class="r" style="left:1365.20px;top:960.00px;width:18.00px;height:1.20px;background:#262b3d;"></div>
<div class="r" style="left:1494.50px;top:960.00px;width:18.50px;height:1.20px;background:#262b3d;"></div>
<div class="r" style="left:14.00px;top:981.00px;width:1601.50px;height:1.00px;background:#e9ecf0;"></div>
<div class="r" style="left:21.00px;top:996.42px;width:19.00px;height:19.80px;border:1.2px solid #d5d9e0;border-radius:5px;box-sizing:border-box;background:#fff;box-shadow:0 1px 1.5px rgba(0,0,0,.05);"></div>
<div class="t" style="right:1516.47px;top:1005.66px;font-size:17.5px;font-weight:400;color:#2a2f3c;letter-spacing:-0.300px;-webkit-text-stroke:0.4px #2a2f3c;">$10.00</div>
<div class="t" style="left:136.40px;top:1005.66px;font-size:17.5px;font-weight:400;color:#414552;letter-spacing:-1.405px;">USD</div>
<div class="r" style="left:185.20px;top:994.65px;width:108.50px;height:23.20px;background:#ecfbe0;border:1px solid #a8e28c;border-radius:5px;box-sizing:border-box;"></div>
<div class="t" style="left:193.70px;top:1006.87px;font-size:14px;font-weight:400;color:#2a7a1a;letter-spacing:0.116px;">Succeeded</div>
<svg class="r" style="left:269.5px;top:1000.70px" width="16" height="12" viewBox="0 0 16 12"><path d="M1.3 6.3l4.1 4.1L14.7 1.2" stroke="#238b09" stroke-width="2.3" fill="none" stroke-linecap="round" stroke-linejoin="round"/></svg>
<div class="r" style="left:324px;top:992.10px;width:25px;height:24.5px;background:#0f52aa;border-radius:3px;"></div>
<div class="t" style="left:326.6px;top:1004.70px;font-size:8.8px;font-weight:700;color:#fff;letter-spacing:-0.2px;transform:skewX(-6deg);-webkit-text-stroke:0.3px #fff">VISA</div>
<div class="r" style="left:360.00px;top:1003.88px;width:4.50px;height:4.50px;background:#3d4250;border-radius:50%;"></div>
<div class="r" style="left:367.07px;top:1003.88px;width:4.50px;height:4.50px;background:#3d4250;border-radius:50%;"></div>
<div class="r" style="left:374.14px;top:1003.88px;width:4.50px;height:4.50px;background:#3d4250;border-radius:50%;"></div>
<div class="r" style="left:381.21px;top:1003.88px;width:4.50px;height:4.50px;background:#3d4250;border-radius:50%;"></div>
<div class="r" style="left:393.0px;top:997.6px;width:38.0px;height:18px;border-radius:3px;overflow:hidden;background:#e3e5e9;display:flex;flex-direction:column"><div style="display:flex;height:50%"><div style="flex:1;background:rgb(230,231,235)"></div><div style="flex:1;background:rgb(234,235,239)"></div><div style="flex:1;background:rgb(234,235,239)"></div><div style="flex:1;background:rgb(234,235,239)"></div></div><div style="display:flex;height:50%"><div style="flex:1;background:rgb(212,213,217)"></div><div style="flex:1;background:rgb(224,225,229)"></div><div style="flex:1;background:rgb(212,213,217)"></div><div style="flex:1;background:rgb(204,205,209)"></div></div></div>
<div class="t" style="left:486.00px;top:1006.08px;font-size:14.55px;font-weight:400;color:#30343f;font-family:'Liberation Mono', monospace;-webkit-text-stroke:0.25px #30343f;">pi_3T</div>
<div class="r" style="left:530.0px;top:997.8px;width:198.0px;height:18px;border-radius:3px;overflow:hidden;background:#e3e5e9;display:flex;flex-direction:column"><div style="display:flex;height:50%"><div style="flex:1;background:rgb(242,243,247)"></div><div style="flex:1;background:rgb(216,217,221)"></div><div style="flex:1;background:rgb(230,231,235)"></div><div style="flex:1;background:rgb(216,217,221)"></div><div style="flex:1;background:rgb(230,231,235)"></div><div style="flex:1;background:rgb(226,227,231)"></div><div style="flex:1;background:rgb(216,217,221)"></div><div style="flex:1;background:rgb(222,223,227)"></div><div style="flex:1;background:rgb(242,243,247)"></div><div style="flex:1;background:rgb(222,223,227)"></div><div style="flex:1;background:rgb(216,217,221)"></div><div style="flex:1;background:rgb(238,239,243)"></div><div style="flex:1;background:rgb(226,227,231)"></div><div style="flex:1;background:rgb(230,231,235)"></div><div style="flex:1;background:rgb(238,239,243)"></div><div style="flex:1;background:rgb(226,227,231)"></div><div style="flex:1;background:rgb(238,239,243)"></div><div style="flex:1;background:rgb(234,235,239)"></div><div style="flex:1;background:rgb(216,217,221)"></div><div style="flex:1;background:rgb(238,239,243)"></div><div style="flex:1;background:rgb(226,227,231)"></div><div style="flex:1;background:rgb(238,239,243)"></div></div><div style="display:flex;height:50%"><div style="flex:1;background:rgb(204,205,209)"></div><div style="flex:1;background:rgb(212,213,217)"></div><div style="flex:1;background:rgb(224,225,229)"></div><div style="flex:1;background:rgb(218,219,223)"></div><div style="flex:1;background:rgb(204,205,209)"></div><div style="flex:1;background:rgb(218,219,223)"></div><div style="flex:1;background:rgb(208,209,213)"></div><div style="flex:1;background:rgb(190,191,195)"></div><div style="flex:1;background:rgb(212,213,217)"></div><div style="flex:1;background:rgb(224,225,229)"></div><div style="flex:1;background:rgb(224,225,229)"></div><div style="flex:1;background:rgb(190,191,195)"></div><div style="flex:1;background:rgb(218,219,223)"></div><div style="flex:1;background:rgb(212,213,217)"></div><div style="flex:1;background:rgb(218,219,223)"></div><div style="flex:1;background:rgb(190,191,195)"></div><div style="flex:1;background:rgb(204,205,209)"></div><div style="flex:1;background:rgb(208,209,213)"></div><div style="flex:1;background:rgb(208,209,213)"></div><div style="flex:1;background:rgb(204,205,209)"></div><div style="flex:1;background:rgb(190,191,195)"></div><div style="flex:1;background:rgb(204,205,209)"></div></div></div>
<div class="r" style="left:755.0px;top:997.9px;width:132.6px;height:18px;border-radius:6px;overflow:hidden;background:#e3e5e9;display:flex;flex-direction:column"><div style="display:flex;height:50%"><div style="flex:1;background:rgb(216,217,221)"></div><div style="flex:1;background:rgb(242,243,247)"></div><div style="flex:1;background:rgb(222,223,227)"></div><div style="flex:1;background:rgb(230,231,235)"></div><div style="flex:1;background:rgb(216,217,221)"></div><div style="flex:1;background:rgb(234,235,239)"></div><div style="flex:1;background:rgb(222,223,227)"></div><div style="flex:1;background:rgb(216,217,221)"></div><div style="flex:1;background:rgb(230,231,235)"></div><div style="flex:1;background:rgb(238,239,243)"></div><div style="flex:1;background:rgb(234,235,239)"></div><div style="flex:1;background:rgb(222,223,227)"></div><div style="flex:1;background:rgb(216,217,221)"></div><div style="flex:1;background:rgb(226,227,231)"></div></div><div style="display:flex;height:50%"><div style="flex:1;background:rgb(204,205,209)"></div><div style="flex:1;background:rgb(212,213,217)"></div><div style="flex:1;background:rgb(198,199,203)"></div><div style="flex:1;background:rgb(190,191,195)"></div><div style="flex:1;background:rgb(198,199,203)"></div><div style="flex:1;background:rgb(224,225,229)"></div><div style="flex:1;background:rgb(224,225,229)"></div><div style="flex:1;background:rgb(208,209,213)"></div><div style="flex:1;background:rgb(204,205,209)"></div><div style="flex:1;background:rgb(198,199,203)"></div><div style="flex:1;background:rgb(208,209,213)"></div><div style="flex:1;background:rgb(224,225,229)"></div><div style="flex:1;background:rgb(204,205,209)"></div><div style="flex:1;background:rgb(208,209,213)"></div></div></div>
<div class="t" style="left:886.60px;top:1005.66px;font-size:17.5px;font-weight:400;color:#353a44;letter-spacing:-0.150px;">m</div>
<div class="t" style="left:1019.40px;top:1005.66px;font-size:17.5px;font-weight:400;color:#21252c;letter-spacing:-0.270px;">Mar 14, 12:50 PM</div>
<div class="t" style="left:1186.80px;top:1005.66px;font-size:17.5px;font-weight:400;color:#2a2f3b;letter-spacing:-0.371px;">alpha</div>
<div class="r" style="left:1365.20px;top:1006.00px;width:18.00px;height:1.20px;background:#262b3d;"></div>
<div class="r" style="left:1494.50px;top:1006.00px;width:18.50px;height:1.20px;background:#262b3d;"></div>
<div class="r" style="left:14.00px;top:1027.00px;width:1601.50px;height:1.00px;background:#e9ecf0;"></div>
<div class="r" style="left:185.20px;top:1040.00px;width:108.50px;height:23.20px;background:#ecfbe0;border:1px solid #a8e28c;border-radius:5px;box-sizing:border-box;"></div>
<svg class="r" style="left:324px;top:1038.15px" width="25" height="25" viewBox="0 0 25 25"><rect width="25" height="25" rx="3" fill="#00d66f"/><path d="M8.3 5.1L12.3 5.1Q16 8.6 19 12.3Q15.8 16 12.3 19.6L8 19.6Q12 15.6 13.4 12.3Q12.2 8.8 8.3 5.1Z" fill="#011e0f"/></svg>
</div>
<div class="r" style="left:1550px;top:335.5px;width:18px;height:705px;background:linear-gradient(90deg,rgba(232,235,240,0),rgba(232,235,240,.5));"></div>
<div class="r" style="left:1568px;top:335.5px;width:47.5px;height:705px;background:#fff;"></div>
<div class="r" style="left:1568.00px;top:380.00px;width:47.50px;height:1.00px;background:#e9ecf0;"></div>
<div class="r" style="left:1585.20px;top:401.68px;width:3.40px;height:3.40px;background:#6c7384;border-radius:50%;"></div>
<div class="r" style="left:1591.15px;top:401.68px;width:3.40px;height:3.40px;background:#6c7384;border-radius:50%;"></div>
<div class="r" style="left:1597.10px;top:401.68px;width:3.40px;height:3.40px;background:#6c7384;border-radius:50%;"></div>
<div class="r" style="left:1568.00px;top:426.00px;width:47.50px;height:1.00px;background:#e9ecf0;"></div>
<div class="r" style="left:1585.20px;top:447.93px;width:3.40px;height:3.40px;background:#6c7384;border-radius:50%;"></div>
<div class="r" style="left:1591.15px;top:447.93px;width:3.40px;height:3.40px;background:#6c7384;border-radius:50%;"></div>
<div class="r" style="left:1597.10px;top:447.93px;width:3.40px;height:3.40px;background:#6c7384;border-radius:50%;"></div>
<div class="r" style="left:1568.00px;top:472.00px;width:47.50px;height:1.00px;background:#e9ecf0;"></div>
<div class="r" style="left:1585.20px;top:494.18px;width:3.40px;height:3.40px;background:#6c7384;border-radius:50%;"></div>
<div class="r" style="left:1591.15px;top:494.18px;width:3.40px;height:3.40px;background:#6c7384;border-radius:50%;"></div>
<div class="r" style="left:1597.10px;top:494.18px;width:3.40px;height:3.40px;background:#6c7384;border-radius:50%;"></div>
<div class="r" style="left:1568.00px;top:518.00px;width:47.50px;height:1.00px;background:#e9ecf0;"></div>
<div class="r" style="left:1585.20px;top:540.42px;width:3.40px;height:3.40px;background:#6c7384;border-radius:50%;"></div>
<div class="r" style="left:1591.15px;top:540.42px;width:3.40px;height:3.40px;background:#6c7384;border-radius:50%;"></div>
<div class="r" style="left:1597.10px;top:540.42px;width:3.40px;height:3.40px;background:#6c7384;border-radius:50%;"></div>
<div class="r" style="left:1568.00px;top:565.00px;width:47.50px;height:1.00px;background:#e9ecf0;"></div>
<div class="r" style="left:1585.20px;top:586.67px;width:3.40px;height:3.40px;background:#6c7384;border-radius:50%;"></div>
<div class="r" style="left:1591.15px;top:586.67px;width:3.40px;height:3.40px;background:#6c7384;border-radius:50%;"></div>
<div class="r" style="left:1597.10px;top:586.67px;width:3.40px;height:3.40px;background:#6c7384;border-radius:50%;"></div>
<div class="r" style="left:1568.00px;top:611.00px;width:47.50px;height:1.00px;background:#e9ecf0;"></div>
<div class="r" style="left:1585.20px;top:632.92px;width:3.40px;height:3.40px;background:#6c7384;border-radius:50%;"></div>
<div class="r" style="left:1591.15px;top:632.92px;width:3.40px;height:3.40px;background:#6c7384;border-radius:50%;"></div>
<div class="r" style="left:1597.10px;top:632.92px;width:3.40px;height:3.40px;background:#6c7384;border-radius:50%;"></div>
<div class="r" style="left:1568.00px;top:657.00px;width:47.50px;height:1.00px;background:#e9ecf0;"></div>
<div class="r" style="left:1585.20px;top:679.17px;width:3.40px;height:3.40px;background:#6c7384;border-radius:50%;"></div>
<div class="r" style="left:1591.15px;top:679.17px;width:3.40px;height:3.40px;background:#6c7384;border-radius:50%;"></div>
<div class="r" style="left:1597.10px;top:679.17px;width:3.40px;height:3.40px;background:#6c7384;border-radius:50%;"></div>
<div class="r" style="left:1568.00px;top:704.00px;width:47.50px;height:1.00px;background:#e9ecf0;"></div>
<div class="r" style="left:1585.20px;top:725.42px;width:3.40px;height:3.40px;background:#6c7384;border-radius:50%;"></div>
<div class="r" style="left:1591.15px;top:725.42px;width:3.40px;height:3.40px;background:#6c7384;border-radius:50%;"></div>
<div class="r" style="left:1597.10px;top:725.42px;width:3.40px;height:3.40px;background:#6c7384;border-radius:50%;"></div>
<div class="r" style="left:1568.00px;top:750.00px;width:47.50px;height:1.00px;background:#e9ecf0;"></div>
<div class="r" style="left:1585.20px;top:771.67px;width:3.40px;height:3.40px;background:#6c7384;border-radius:50%;"></div>
<div class="r" style="left:1591.15px;top:771.67px;width:3.40px;height:3.40px;background:#6c7384;border-radius:50%;"></div>
<div class="r" style="left:1597.10px;top:771.67px;width:3.40px;height:3.40px;background:#6c7384;border-radius:50%;"></div>
<div class="r" style="left:1568.00px;top:796.00px;width:47.50px;height:1.00px;background:#e9ecf0;"></div>
<div class="r" style="left:1585.20px;top:817.92px;width:3.40px;height:3.40px;background:#6c7384;border-radius:50%;"></div>
<div class="r" style="left:1591.15px;top:817.92px;width:3.40px;height:3.40px;background:#6c7384;border-radius:50%;"></div>
<div class="r" style="left:1597.10px;top:817.92px;width:3.40px;height:3.40px;background:#6c7384;border-radius:50%;"></div>
<div class="r" style="left:1568.00px;top:842.00px;width:47.50px;height:1.00px;background:#e9ecf0;"></div>
<div class="r" style="left:1585.20px;top:864.17px;width:3.40px;height:3.40px;background:#6c7384;border-radius:50%;"></div>
<div class="r" style="left:1591.15px;top:864.17px;width:3.40px;height:3.40px;background:#6c7384;border-radius:50%;"></div>
<div class="r" style="left:1597.10px;top:864.17px;width:3.40px;height:3.40px;background:#6c7384;border-radius:50%;"></div>
<div class="r" style="left:1568.00px;top:888.00px;width:47.50px;height:1.00px;background:#e9ecf0;"></div>
<div class="r" style="left:1585.20px;top:910.42px;width:3.40px;height:3.40px;background:#6c7384;border-radius:50%;"></div>
<div class="r" style="left:1591.15px;top:910.42px;width:3.40px;height:3.40px;background:#6c7384;border-radius:50%;"></div>
<div class="r" style="left:1597.10px;top:910.42px;width:3.40px;height:3.40px;background:#6c7384;border-radius:50%;"></div>
<div class="r" style="left:1568.00px;top:935.00px;width:47.50px;height:1.00px;background:#e9ecf0;"></div>
<div class="r" style="left:1585.20px;top:956.67px;width:3.40px;height:3.40px;background:#6c7384;border-radius:50%;"></div>
<div class="r" style="left:1591.15px;top:956.67px;width:3.40px;height:3.40px;background:#6c7384;border-radius:50%;"></div>
<div class="r" style="left:1597.10px;top:956.67px;width:3.40px;height:3.40px;background:#6c7384;border-radius:50%;"></div>
<div class="r" style="left:1568.00px;top:981.00px;width:47.50px;height:1.00px;background:#e9ecf0;"></div>
<div class="r" style="left:1585.20px;top:1002.92px;width:3.40px;height:3.40px;background:#6c7384;border-radius:50%;"></div>
<div class="r" style="left:1591.15px;top:1002.92px;width:3.40px;height:3.40px;background:#6c7384;border-radius:50%;"></div>
<div class="r" style="left:1597.10px;top:1002.92px;width:3.40px;height:3.40px;background:#6c7384;border-radius:50%;"></div>
<div class="r" style="left:1568.00px;top:1027.00px;width:47.50px;height:1.00px;background:#e9ecf0;"></div>
<div class="r" style="left:14.00px;top:1040.00px;width:170.00px;height:1.00px;background:#e6e9ed;"></div>
<div class="r" style="left:294.00px;top:1040.00px;width:30.00px;height:1.00px;background:#e6e9ed;"></div>
<div class="r" style="left:349.00px;top:1040.00px;width:1266.50px;height:1.00px;background:#e6e9ed;"></div>
<div class="t" style="left:15.2px;top:1067.74px;font-size:17.5px;color:#414552;letter-spacing:-0.2px">Viewing <b style="font-weight:400;-webkit-text-stroke:0.55px #353a44;color:#353a44">1–20</b> of <b style="font-weight:400;-webkit-text-stroke:0.55px #353a44;color:#353a44">3,687</b> items</div>
<div class="r" style="left:1473.20px;top:1050.10px;width:79.20px;height:32.00px;border:1px solid #e3e7ec;border-radius:8px;box-sizing:border-box;"></div>
<div class="t" style="left:1484.10px;top:1066.26px;font-size:16px;font-weight:400;color:#a3acb9;letter-spacing:-0.650px;">Previous</div>
<div class="r" style="left:1561.10px;top:1050.10px;width:54.60px;height:32.00px;border:1px solid #d8dee6;border-radius:8px;box-sizing:border-box;"></div>
<div class="t" style="left:1571.80px;top:1066.26px;font-size:16px;font-weight:400;color:#2a2f3c;letter-spacing:-0.384px;-webkit-text-stroke:0.55px #2a2f3c;">Next</div>
</body></html>
